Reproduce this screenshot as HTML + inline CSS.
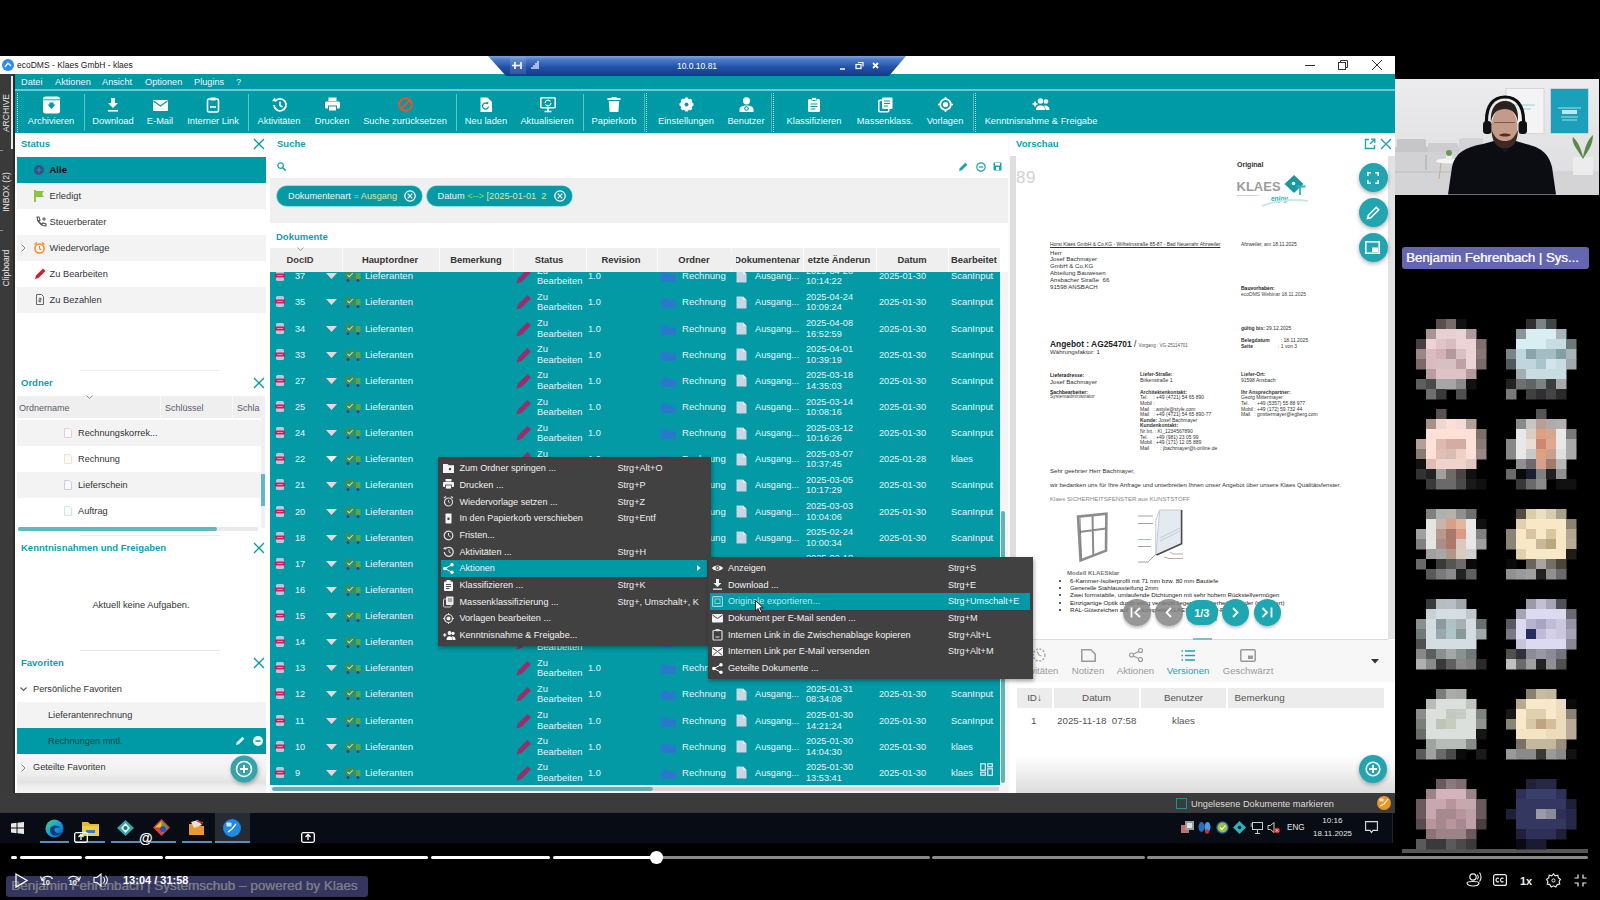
<!DOCTYPE html>
<html><head><meta charset="utf-8">
<style>
*{margin:0;padding:0;box-sizing:border-box}
html,body{width:1600px;height:900px;overflow:hidden;background:#000;font-family:"Liberation Sans",sans-serif}
.a{position:absolute}
.t{position:absolute;white-space:nowrap;line-height:12px;height:12px;font-size:9px}
svg{position:absolute;overflow:visible}
</style></head><body>
<div class="a" style="left:0px;top:56px;width:1395px;height:18px;background:#fff;"></div>
<svg style="left:2px;top:59px;" width="12" height="12" viewBox="0 0 12 12"><circle cx="6" cy="6" r="6" fill="#2a8ee8"/><path d="M3 8 L6 4 L9 7" stroke="#fff" stroke-width="1.3" fill="none"/></svg>
<div class="t" style="left:17px;top:59px;font-size:8.5px;color:#222;">ecoDMS - Klaes GmbH - klaes</div>
<svg style="left:488px;top:56px;z-index:5" width="420" height="20" viewBox="0 0 420 20"><defs><linearGradient id="rdg" x1="0" y1="0" x2="0" y2="1"><stop offset="0" stop-color="#7aa2dc"/><stop offset="0.2" stop-color="#4a78c8"/><stop offset="0.55" stop-color="#2452a8"/><stop offset="1" stop-color="#123a86"/></linearGradient></defs><path d="M0 0 H418 L401 20 H18 Z" fill="url(#rdg)"/><rect x="22" y="1" width="16" height="17" fill="#fff" opacity="0.12"/><path d="M27 6 v7 M24 9.5 h8 M33 6 v7" stroke="#fff" stroke-width="1.6"/><path d="M44 13 v-2 M46 13 v-4 M48 13 v-6 M50 13 v-8" stroke="#fff" stroke-width="1.2"/><path d="M352 13 h5" stroke="#fff" stroke-width="1.5"/><rect x="368" y="8.5" width="5" height="4" stroke="#fff" fill="none" stroke-width="1.2"/><path d="M370 6.5 h5 v4" stroke="#fff" fill="none" stroke-width="1.2"/><path d="M385 7 l5 5 M390 7 l-5 5" stroke="#fff" stroke-width="1.8"/></svg>
<div class="t" style="left:597px;top:60px;font-size:8.5px;color:#fff;width:200px;text-align:center;z-index:6">10.0.10.81</div>
<div class="a" style="left:1305px;top:65px;width:10px;height:1px;background:#333;"></div>
<svg style="left:1338px;top:60px;" width="10" height="10" viewBox="0 0 10 10"><rect x="0.5" y="2.5" width="7" height="7" fill="none" stroke="#333" stroke-width="1"/><path d="M2.5 2.5 V0.5 H9.5 V7.5 H7.5" fill="none" stroke="#333" stroke-width="1"/></svg>
<svg style="left:1372px;top:60px;" width="10" height="10" viewBox="0 0 10 10"><path d="M0 0 L10 10 M10 0 L0 10" stroke="#333" stroke-width="1"/></svg>
<div class="a" style="left:0px;top:74px;width:15px;height:719px;background:#3a3a3a;"></div>
<div class="a" style="left:15px;top:74px;width:1380px;height:59px;background:#009aa6;"></div>
<div class="a" style="left:15px;top:89px;width:1380px;height:2px;background:#6cc9d1;"></div>
<div class="t" style="left:21px;top:76px;font-size:9.2px;color:#eaf8f9;">Datei</div>
<div class="t" style="left:55px;top:76px;font-size:9.2px;color:#eaf8f9;">Aktionen</div>
<div class="t" style="left:102px;top:76px;font-size:9.2px;color:#eaf8f9;">Ansicht</div>
<div class="t" style="left:145px;top:76px;font-size:9.2px;color:#eaf8f9;">Optionen</div>
<div class="t" style="left:194px;top:76px;font-size:9.2px;color:#eaf8f9;">Plugins</div>
<div class="t" style="left:236px;top:76px;font-size:9.2px;color:#eaf8f9;">?</div>
<svg style="left:44px;top:97px;" width="15" height="16" viewBox="0 0 15 16"><rect x="-1" y="-0.5" width="17" height="17" rx="2.5" fill="#fff"/><path d="M-1 2.8 h17" stroke="#009aa6" stroke-width="0.9"/><path d="M3.5 7.5 h8 l-4 4.5z M5.5 5.5 h4 v2.5 h-4z" fill="#009aa6"/></svg>
<div class="t" style="left:-49px;top:115px;font-size:9.3px;color:#f0fbfc;width:200px;text-align:center;">Archivieren</div>
<svg style="left:106px;top:97px;" width="15" height="16" viewBox="0 0 15 16"><path d="M5 1 h4 v5 h3 l-5 5 l-5-5 h3z" fill="#fff"/><rect x="2" y="13" width="10" height="1.6" fill="#fff"/></svg>
<div class="t" style="left:13px;top:115px;font-size:9.3px;color:#f0fbfc;width:200px;text-align:center;">Download</div>
<svg style="left:153px;top:97px;" width="15" height="16" viewBox="0 0 15 16"><rect x="0" y="3" width="15" height="11" rx="1" fill="#fff"/><path d="M0.5 4 L7.5 9 L14.5 4" stroke="#009aa6" stroke-width="1.2" fill="none"/></svg>
<div class="t" style="left:60px;top:115px;font-size:9.3px;color:#f0fbfc;width:200px;text-align:center;">E-Mail</div>
<svg style="left:206px;top:97px;" width="15" height="16" viewBox="0 0 15 16"><rect x="1.5" y="2" width="11" height="13" rx="1.5" fill="none" stroke="#fff" stroke-width="1.6"/><rect x="4.5" y="0.5" width="5" height="3" fill="#fff"/><path d="M4 10 h6" stroke="#fff" stroke-width="1.6"/></svg>
<div class="t" style="left:113px;top:115px;font-size:9.3px;color:#f0fbfc;width:200px;text-align:center;">Interner Link</div>
<svg style="left:272px;top:97px;" width="15" height="16" viewBox="0 0 15 16"><path d="M3.2 4.2 A6 6 0 1 1 2 8" fill="none" stroke="#fff" stroke-width="1.8"/><path d="M0 4 L4 4.5 L3 0.5z" fill="#fff"/><path d="M8 4.5 v4 l2.5 1.5" stroke="#fff" stroke-width="1.5" fill="none"/></svg>
<div class="t" style="left:179px;top:115px;font-size:9.3px;color:#f0fbfc;width:200px;text-align:center;">Aktivitäten</div>
<svg style="left:325px;top:97px;" width="15" height="16" viewBox="0 0 15 16"><rect x="3.5" y="0.5" width="8" height="3.5" fill="#fff"/><rect x="0" y="4.5" width="15" height="7" rx="1.5" fill="#fff"/><rect x="3.5" y="9" width="8" height="5" fill="#fff" stroke="#009aa6" stroke-width="1"/></svg>
<div class="t" style="left:232px;top:115px;font-size:9.3px;color:#f0fbfc;width:200px;text-align:center;">Drucken</div>
<svg style="left:398px;top:97px;" width="15" height="16" viewBox="0 0 15 16"><circle cx="7.5" cy="7.5" r="6.3" fill="none" stroke="#e8532e" stroke-width="2"/><path d="M3 12 L12 3" stroke="#e8532e" stroke-width="2"/></svg>
<div class="t" style="left:305px;top:115px;font-size:9.3px;color:#f0fbfc;width:200px;text-align:center;">Suche zurücksetzen</div>
<svg style="left:479px;top:97px;" width="15" height="16" viewBox="0 0 15 16"><path d="M1.5 0.5 h7 l4.5 4.5 v10 h-11.5z" fill="#fff"/><path d="M9.5 9.5 A3 3 0 1 1 8.5 6.8" stroke="#009aa6" stroke-width="1.3" fill="none"/><path d="M7 5 l2.5 0 l-0.5 2.5z" fill="#009aa6"/></svg>
<div class="t" style="left:386px;top:115px;font-size:9.3px;color:#f0fbfc;width:200px;text-align:center;">Neu laden</div>
<svg style="left:540px;top:97px;" width="15" height="16" viewBox="0 0 15 16"><rect x="0.8" y="0.8" width="14.4" height="10" rx="1" fill="none" stroke="#fff" stroke-width="1.6"/><path d="M8 11 v3 M4.5 14.5 h7" stroke="#fff" stroke-width="1.6"/><path d="M5 6 A3 3 0 0 1 10.5 4.5 M11 6 A3 3 0 0 1 5.5 7.5" stroke="#fff" stroke-width="1.2" fill="none"/></svg>
<div class="t" style="left:447px;top:115px;font-size:9.3px;color:#f0fbfc;width:200px;text-align:center;">Aktualisieren</div>
<svg style="left:607px;top:97px;" width="15" height="16" viewBox="0 0 15 16"><rect x="0.5" y="1" width="13" height="2" fill="#fff"/><rect x="4.5" y="0" width="5" height="1.5" fill="#fff"/><path d="M1.8 4 h10.4 l-0.8 11 h-8.8z" fill="#fff"/></svg>
<div class="t" style="left:514px;top:115px;font-size:9.3px;color:#f0fbfc;width:200px;text-align:center;">Papierkorb</div>
<svg style="left:679px;top:97px;" width="15" height="16" viewBox="0 0 15 16"><circle cx="7.5" cy="7.5" r="4.6" fill="none" stroke="#fff" stroke-width="3.2"/><path d="M7.5 0.5 v14 M0.5 7.5 h14 M2.5 2.5 l10 10 M12.5 2.5 l-10 10" stroke="#fff" stroke-width="2.6"/><circle cx="7.5" cy="7.5" r="2" fill="#009aa6"/></svg>
<div class="t" style="left:586px;top:115px;font-size:9.3px;color:#f0fbfc;width:200px;text-align:center;">Einstellungen</div>
<svg style="left:739px;top:97px;" width="15" height="16" viewBox="0 0 15 16"><circle cx="7.5" cy="3.8" r="3.6" fill="#fff"/><path d="M0.5 15 v-2.5 C0.5 9.5 4 8.5 7.5 8.5 C11 8.5 14.5 9.5 14.5 12.5 V15z" fill="#fff"/><circle cx="7.5" cy="11.5" r="1.8" fill="none" stroke="#009aa6" stroke-width="1.1"/></svg>
<div class="t" style="left:646px;top:115px;font-size:9.3px;color:#f0fbfc;width:200px;text-align:center;">Benutzer</div>
<svg style="left:807px;top:97px;" width="15" height="16" viewBox="0 0 15 16"><rect x="1" y="2" width="12" height="13" rx="1.5" fill="#fff"/><rect x="4.5" y="0.5" width="5" height="3" rx="0.8" fill="#fff" stroke="#009aa6" stroke-width="0.8"/><path d="M3.5 7 h7 M3.5 9.5 h7 M3.5 12 h5" stroke="#009aa6" stroke-width="1.1"/></svg>
<div class="t" style="left:714px;top:115px;font-size:9.3px;color:#f0fbfc;width:200px;text-align:center;">Klassifizieren</div>
<svg style="left:878px;top:97px;" width="15" height="16" viewBox="0 0 15 16"><rect x="0.8" y="3.2" width="10" height="11.5" rx="1" fill="none" stroke="#fff" stroke-width="1.5"/><rect x="4" y="0.5" width="10.5" height="11.5" rx="1" fill="#fff"/><path d="M6 4 h6 M6 6.5 h6 M6 9 h4" stroke="#009aa6" stroke-width="1"/></svg>
<div class="t" style="left:785px;top:115px;font-size:9.3px;color:#f0fbfc;width:200px;text-align:center;">Massenklass.</div>
<svg style="left:938px;top:97px;" width="15" height="16" viewBox="0 0 15 16"><circle cx="7.5" cy="7.5" r="5.3" fill="none" stroke="#fff" stroke-width="1.8"/><circle cx="7.5" cy="7.5" r="2.6" fill="#fff"/><path d="M7.5 0 v2.2 M7.5 12.8 v2.2 M0 7.5 h2.2 M12.8 7.5 h2.2" stroke="#fff" stroke-width="1.6"/></svg>
<div class="t" style="left:845px;top:115px;font-size:9.3px;color:#f0fbfc;width:200px;text-align:center;">Vorlagen</div>
<svg style="left:1032px;top:97px;" width="18" height="16" viewBox="0 0 18 16"><path d="M0.5 7 h5 M3 4.5 v5" stroke="#fff" stroke-width="1.6"/><circle cx="8.5" cy="4" r="2.8" fill="#fff"/><circle cx="14" cy="4.5" r="2.3" fill="#fff"/><path d="M3.8 13 C4 9.5 6 8.5 8.5 8.5 C11 8.5 13 9.5 13 13z" fill="#fff"/><path d="M12 8.5 C15 8.5 17.5 9.5 17.5 13 h-3.5" fill="#fff"/></svg>
<div class="t" style="left:941px;top:115px;font-size:9.3px;color:#f0fbfc;width:200px;text-align:center;">Kenntnisnahme &amp; Freigabe</div>
<div class="a" style="left:84px;top:94px;width:1px;height:37px;background:#5fc4cc;"></div>
<div class="a" style="left:248px;top:94px;width:1px;height:37px;background:#5fc4cc;"></div>
<div class="a" style="left:456px;top:94px;width:1px;height:37px;background:#5fc4cc;"></div>
<div class="a" style="left:583px;top:94px;width:1px;height:37px;background:#5fc4cc;"></div>
<div class="a" style="left:17px;top:93px;width:0;height:39px;border-left:1px dotted #bfe9ed"></div>
<div class="a" style="left:646px;top:93px;width:0;height:39px;border-left:1px dotted #bfe9ed"></div>
<div class="a" style="left:644px;top:93px;width:1px;height:39px;background:#4dbac3;"></div>
<div class="a" style="left:773px;top:93px;width:0;height:39px;border-left:1px dotted #bfe9ed"></div>
<div class="a" style="left:771px;top:93px;width:1px;height:39px;background:#4dbac3;"></div>
<div class="a" style="left:975px;top:93px;width:0;height:39px;border-left:1px dotted #bfe9ed"></div>
<div class="a" style="left:973px;top:93px;width:1px;height:39px;background:#4dbac3;"></div>
<div class="a" style="left:15px;top:133px;width:1380px;height:660px;background:#fff;"></div>
<div class="a" style="left:11px;top:76px;width:2px;height:73px;background:#e8e8e8;"></div>
<div class="a" style="left:13px;top:74px;width:2px;height:719px;background:#2a2a2a;"></div>
<div class="a" style="left:0px;top:150px;width:3px;height:1px;background:#888;"></div>
<div class="a" style="left:0px;top:230px;width:3px;height:1px;background:#888;"></div>
<div class="t" style="left:-44px;top:107px;width:100px;text-align:center;font-size:8.6px;color:#e6e6e6;transform:rotate(-90deg)">ARCHIVE</div>
<div class="t" style="left:-44px;top:186px;width:100px;text-align:center;font-size:8.6px;color:#e6e6e6;transform:rotate(-90deg)">INBOX (2)</div>
<div class="t" style="left:-44px;top:262px;width:100px;text-align:center;font-size:8.6px;color:#e6e6e6;transform:rotate(-90deg)">Clipboard</div>
<div class="t" style="left:21px;top:138px;font-size:9.5px;color:#0a9fb0;font-weight:bold;">Status</div>
<svg style="left:254px;top:139px;" width="10" height="10" viewBox="0 0 10 10"><path d="M0 0 L10 10 M10 0 L0 10" stroke="#009aa6" stroke-width="1.3"/></svg>
<div class="a" style="left:17px;top:157px;width:249px;height:26px;background:#009aa6;"></div>
<svg style="left:34px;top:165px;" width="10" height="10" viewBox="0 0 10 10"><circle cx="5" cy="5" r="5" fill="#3d4d8c"/><path d="M5 2.5 v5 M2.5 5 h5" stroke="#0aa0ad" stroke-width="1.2"/></svg>
<div class="t" style="left:49.5px;top:164px;font-size:9.5px;color:#111;font-weight:bold;">Alle</div>
<div class="a" style="left:17px;top:183px;width:249px;height:26px;background:#f3f3f3;"></div>
<div class="t" style="left:49.5px;top:190px;font-size:9.3px;color:#34363b;">Erledigt</div>
<div class="a" style="left:17px;top:209px;width:249px;height:26px;background:#fff;"></div>
<div class="t" style="left:49.5px;top:216px;font-size:9.3px;color:#34363b;">Steuerberater</div>
<div class="a" style="left:17px;top:235px;width:249px;height:26px;background:#f3f3f3;"></div>
<div class="t" style="left:49.5px;top:242px;font-size:9.3px;color:#34363b;">Wiedervorlage</div>
<div class="a" style="left:17px;top:261px;width:249px;height:26px;background:#fff;"></div>
<div class="t" style="left:49.5px;top:268px;font-size:9.3px;color:#34363b;">Zu Bearbeiten</div>
<div class="a" style="left:17px;top:287px;width:249px;height:26px;background:#f3f3f3;"></div>
<div class="t" style="left:49.5px;top:294px;font-size:9.3px;color:#34363b;">Zu Bezahlen</div>
<svg style="left:34px;top:190px;" width="11" height="12" viewBox="0 0 11 12"><path d="M1 0 v12" stroke="#8cc63f" stroke-width="2"/><path d="M1 1 h9 l-2 3 l2 3 h-9z" fill="#8cc63f"/></svg>
<svg style="left:35px;top:216px;" width="10" height="11" viewBox="0 0 10 11"><path d="M2 1 l2 0 l1 3 l-1.3 1 c0.8 1.6 1.8 2.6 3.3 3.3 l1-1.3 l3 1 v2 c-4 0.5-9-4-9-9z" fill="none" stroke="#555" stroke-width="1.1"/><path d="M7 3 h4 M9 1 v4" stroke="#555" stroke-width="1"/></svg>
<svg style="left:21px;top:244px;" width="5" height="8" viewBox="0 0 5 8"><path d="M0.5 0.5 l3.5 3.5 l-3.5 3.5" stroke="#888" stroke-width="1" fill="none"/></svg>
<svg style="left:34px;top:242px;" width="11" height="12" viewBox="0 0 11 12"><circle cx="5.5" cy="6.5" r="4.6" fill="none" stroke="#f08a24" stroke-width="1.5"/><path d="M5.5 4 v2.6 l1.8 1.2" stroke="#f08a24" stroke-width="1.1" fill="none"/><path d="M0.5 2.5 l2.5-2 M10.5 2.5 l-2.5-2" stroke="#f08a24" stroke-width="1.5"/></svg>
<svg style="left:34px;top:268px;" width="12" height="12" viewBox="0 0 12 12"><path d="M1 11 l1-3.5 l7-7 l2.5 2.5 l-7 7z" fill="#d0202e"/></svg>
<svg style="left:36px;top:294px;" width="8" height="11" viewBox="0 0 8 11"><path d="M0.5 0.5 h5 l2 2 v8 h-7z" fill="none" stroke="#666" stroke-width="1"/><path d="M4 3.5 v5 M2.8 4.5 h2.4 v1.5 h-2.4 v1.5 h2.4" stroke="#666" stroke-width="0.8" fill="none"/></svg>
<div class="a" style="left:80px;top:370px;width:140px;height:1px;background:#ececec;"></div>
<div class="t" style="left:21px;top:377px;font-size:9.5px;color:#0a9fb0;font-weight:bold;">Ordner</div>
<svg style="left:254px;top:378px;" width="10" height="10" viewBox="0 0 10 10"><path d="M0 0 L10 10 M10 0 L0 10" stroke="#009aa6" stroke-width="1.3"/></svg>
<div class="a" style="left:17px;top:396px;width:244px;height:22px;background:#efefef;"></div>
<div class="a" style="left:160px;top:396px;width:1px;height:22px;background:#fafafa;"></div>
<div class="a" style="left:232px;top:396px;width:1px;height:22px;background:#fafafa;"></div>
<svg style="left:86px;top:395px;" width="7" height="4" viewBox="0 0 7 4"><path d="M0.5 0.5 l3 3 l3-3" stroke="#777" stroke-width="0.8" fill="none"/></svg>
<div class="t" style="left:19px;top:402px;font-size:9px;color:#5a5a6a;">Ordnername</div>
<div class="t" style="left:165px;top:402px;font-size:9px;color:#5a5a6a;">Schlüssel</div>
<div class="t" style="left:237px;top:402px;font-size:9px;color:#5a5a6a;">Schla</div>
<div class="a" style="left:17px;top:420px;width:244px;height:26px;background:#f3f3f3;"></div>
<svg style="left:64px;top:428px;" width="8" height="10" viewBox="0 0 8 10"><path d="M0.5 0.5 h5 l2 2 v7 h-7z" fill="#fafafa" stroke="#e8c8e8" stroke-width="1"/></svg>
<div class="t" style="left:78px;top:427px;font-size:9.2px;color:#333;">Rechnungskorrek...</div>
<div class="a" style="left:17px;top:446px;width:244px;height:26px;background:#fff;"></div>
<svg style="left:64px;top:454px;" width="8" height="10" viewBox="0 0 8 10"><path d="M0.5 0.5 h5 l2 2 v7 h-7z" fill="#fafafa" stroke="#ecebc0" stroke-width="1"/></svg>
<div class="t" style="left:78px;top:453px;font-size:9.2px;color:#333;">Rechnung</div>
<div class="a" style="left:17px;top:472px;width:244px;height:26px;background:#f3f3f3;"></div>
<svg style="left:64px;top:480px;" width="8" height="10" viewBox="0 0 8 10"><path d="M0.5 0.5 h5 l2 2 v7 h-7z" fill="#fafafa" stroke="#cfc8ec" stroke-width="1"/></svg>
<div class="t" style="left:78px;top:479px;font-size:9.2px;color:#333;">Lieferschein</div>
<div class="a" style="left:17px;top:498px;width:244px;height:26px;background:#fff;"></div>
<svg style="left:64px;top:506px;" width="8" height="10" viewBox="0 0 8 10"><path d="M0.5 0.5 h5 l2 2 v7 h-7z" fill="#fafafa" stroke="#cde9d8" stroke-width="1"/></svg>
<div class="t" style="left:78px;top:505px;font-size:9.2px;color:#333;">Auftrag</div>
<div class="a" style="left:261px;top:396px;width:4px;height:132px;background:#f0f0f0;"></div>
<div class="a" style="left:261px;top:474px;width:4px;height:32px;background:#5fb9bf;"></div>
<div class="a" style="left:18px;top:527px;width:240px;height:4px;background:#eaeaea;"></div>
<div class="a" style="left:18px;top:527px;width:199px;height:4px;background:#5fb9bf;border-radius:2px"></div>
<div class="a" style="left:80px;top:535px;width:140px;height:1px;background:#ececec;"></div>
<div class="t" style="left:21px;top:542px;font-size:9.5px;color:#0a9fb0;font-weight:bold;">Kenntnisnahmen und Freigaben</div>
<svg style="left:254px;top:543px;" width="10" height="10" viewBox="0 0 10 10"><path d="M0 0 L10 10 M10 0 L0 10" stroke="#009aa6" stroke-width="1.3"/></svg>
<div class="t" style="left:41px;top:599px;font-size:9.3px;color:#333;width:200px;text-align:center;">Aktuell keine Aufgaben.</div>
<div class="a" style="left:80px;top:650px;width:140px;height:1px;background:#e6e6e6;"></div>
<div class="t" style="left:21px;top:657px;font-size:9.5px;color:#0a9fb0;font-weight:bold;">Favoriten</div>
<svg style="left:254px;top:658px;" width="10" height="10" viewBox="0 0 10 10"><path d="M0 0 L10 10 M10 0 L0 10" stroke="#009aa6" stroke-width="1.3"/></svg>
<svg style="left:20px;top:687px;" width="7" height="5" viewBox="0 0 7 5"><path d="M0.5 0.5 l3 3 l3-3" stroke="#555" stroke-width="1.1" fill="none"/></svg>
<div class="t" style="left:33px;top:683px;font-size:9.2px;color:#333;">Persönliche Favoriten</div>
<div class="a" style="left:17px;top:702px;width:249px;height:26px;background:#f3f3f3;"></div>
<div class="t" style="left:48px;top:709px;font-size:9.2px;color:#333;">Lieferantenrechnung</div>
<div class="a" style="left:17px;top:728px;width:249px;height:26px;background:#009aa6;"></div>
<div class="t" style="left:48px;top:735px;font-size:9.2px;color:#17433f;">Rechnungen mntl.</div>
<svg style="left:235px;top:736px;" width="10" height="10" viewBox="0 0 10 10"><path d="M1 9 l0.8-2.8 l5.5-5.5 l2 2 l-5.5 5.5z" fill="#e8f6f7"/></svg>
<svg style="left:253px;top:736px;" width="10" height="10" viewBox="0 0 10 10"><circle cx="5" cy="5" r="5" fill="#f2fbfb"/><path d="M2.5 5 h5" stroke="#009aa6" stroke-width="1.5"/></svg>
<div class="a" style="left:17px;top:754px;width:249px;height:39px;background:linear-gradient(#f8f8f8 0%,#efefef 50%,#e2e2e2 72%,#f0f0f0 85%,#f4f4f4 100%);"></div>
<svg style="left:21px;top:764px;" width="5" height="8" viewBox="0 0 5 8"><path d="M0.5 0.5 l3.5 3.5 l-3.5 3.5" stroke="#888" stroke-width="1" fill="none"/></svg>
<div class="t" style="left:33px;top:761px;font-size:9.2px;color:#333;">Geteilte Favoriten</div>
<svg style="left:230px;top:755px;filter:drop-shadow(1px 2px 2px rgba(0,0,0,.3))" width="28" height="28" viewBox="0 0 28 28"><circle cx="14" cy="14" r="13.5" fill="#34a3aa"/><circle cx="14" cy="14" r="7.5" fill="none" stroke="#fff" stroke-width="1.6"/><path d="M14 10 v8 M10 14 h8" stroke="#fff" stroke-width="1.8"/></svg>
<div class="a" style="left:266px;top:133px;width:4px;height:660px;background:#fff;"></div>
<div class="t" style="left:277px;top:138px;font-size:9.5px;color:#0a9fb0;font-weight:bold;">Suche</div>
<svg style="left:277px;top:162px;" width="9" height="9" viewBox="0 0 9 9"><circle cx="3.6" cy="3.6" r="2.8" fill="none" stroke="#1aa3ae" stroke-width="1.3"/><path d="M5.6 5.6 l3 3" stroke="#1aa3ae" stroke-width="1.5"/></svg>
<svg style="left:958px;top:162px;" width="10" height="10" viewBox="0 0 10 10"><path d="M1 9 l0.8-2.8 l5.5-5.5 l2 2 l-5.5 5.5z" fill="#1aa3ae"/></svg>
<svg style="left:976px;top:162px;" width="10" height="10" viewBox="0 0 10 10"><circle cx="5" cy="5" r="4.2" fill="none" stroke="#1aa3ae" stroke-width="1.2"/><path d="M2.8 5 h4.4" stroke="#1aa3ae" stroke-width="1.3"/></svg>
<svg style="left:993px;top:162px;" width="9" height="9" viewBox="0 0 9 9"><rect x="0.5" y="0.5" width="8" height="8" rx="0.8" fill="#1aa3ae"/><rect x="2" y="1" width="5" height="2.5" fill="#fff"/><rect x="3" y="5" width="3" height="3" fill="#fff"/></svg>
<div class="a" style="left:270px;top:178px;width:738px;height:45px;background:#f0f0f0;"></div>
<div class="a" style="left:277px;top:186px;width:145px;height:19.5px;border-radius:10px;background:#0899a5;box-shadow:0 0 0 0.6px #3cc7d2"></div>
<div class="a" style="left:427px;top:186px;width:145px;height:19.5px;border-radius:10px;background:#0899a5;box-shadow:0 0 0 0.6px #3cc7d2"></div>
<div class="t" style="left:288px;top:189.5px;font-size:9.2px;color:#eef6f0;">Dokumentenart <span style="color:#b8ee58">=</span> <span style="color:#d6e8a8">Ausgang</span></div>
<div class="t" style="left:437.5px;top:189.5px;font-size:9.2px;color:#eef6f0;">Datum <span style="color:#7fe05a">&lt;--&gt;</span> <span style="color:#d8e6a0">[2025-01-01&nbsp; 2</span></div>
<svg style="left:403.5px;top:189.5px;" width="12" height="12" viewBox="0 0 12 12"><circle cx="6" cy="6" r="5.2" fill="none" stroke="#fff" stroke-width="1.2"/><path d="M3.7 3.7 l4.6 4.6 M8.3 3.7 l-4.6 4.6" stroke="#fff" stroke-width="1.2"/></svg>
<svg style="left:553.7px;top:189.5px;" width="12" height="12" viewBox="0 0 12 12"><circle cx="6" cy="6" r="5.2" fill="none" stroke="#fff" stroke-width="1.2"/><path d="M3.7 3.7 l4.6 4.6 M8.3 3.7 l-4.6 4.6" stroke="#fff" stroke-width="1.2"/></svg>
<div class="t" style="left:276px;top:231px;font-size:9.5px;color:#0a9fb0;font-weight:bold;">Dokumente</div>
<div class="a" style="left:270px;top:248px;width:730px;height:24px;background:#efefef;"></div>
<div class="a" style="left:342px;top:248px;width:1px;height:24px;background:#fbfbfb;"></div>
<div class="a" style="left:439px;top:248px;width:1px;height:24px;background:#fbfbfb;"></div>
<div class="a" style="left:513px;top:248px;width:1px;height:24px;background:#fbfbfb;"></div>
<div class="a" style="left:586px;top:248px;width:1px;height:24px;background:#fbfbfb;"></div>
<div class="a" style="left:657px;top:248px;width:1px;height:24px;background:#fbfbfb;"></div>
<div class="a" style="left:731px;top:248px;width:1px;height:24px;background:#fbfbfb;"></div>
<div class="a" style="left:803px;top:248px;width:1px;height:24px;background:#fbfbfb;"></div>
<div class="a" style="left:876px;top:248px;width:1px;height:24px;background:#fbfbfb;"></div>
<div class="a" style="left:948px;top:248px;width:1px;height:24px;background:#fbfbfb;"></div>
<svg style="left:297px;top:247px;" width="7" height="4" viewBox="0 0 7 4"><path d="M0.5 0.5 l3 3 l3-3" stroke="#888" stroke-width="0.8" fill="none"/></svg>
<div class="t" style="left:200px;top:254px;font-size:9.4px;color:#4a3a3a;font-weight:bold;width:200px;text-align:center;">DocID</div>
<div class="t" style="left:290px;top:254px;font-size:9.4px;color:#3a3030;font-weight:bold;width:200px;text-align:center;">Hauptordner</div>
<div class="t" style="left:376px;top:254px;font-size:9.4px;color:#333;font-weight:bold;width:200px;text-align:center;">Bemerkung</div>
<div class="t" style="left:449px;top:254px;font-size:9.4px;color:#333;font-weight:bold;width:200px;text-align:center;">Status</div>
<div class="t" style="left:521px;top:254px;font-size:9.4px;color:#333;font-weight:bold;width:200px;text-align:center;">Revision</div>
<div class="t" style="left:594px;top:254px;font-size:9.4px;color:#333;font-weight:bold;width:200px;text-align:center;">Ordner</div>
<div class="t" style="left:667px;top:254px;font-size:9.4px;color:#333;font-weight:bold;width:200px;text-align:center;">Dokumentenar</div>
<div class="t" style="left:739px;top:254px;font-size:9.4px;color:#333;font-weight:bold;width:200px;text-align:center;">etzte Änderun</div>
<div class="t" style="left:812px;top:254px;font-size:9.4px;color:#333;font-weight:bold;width:200px;text-align:center;">Datum</div>
<div class="t" style="left:874px;top:254px;font-size:9.4px;color:#333;font-weight:bold;width:200px;text-align:center;">Bearbeitet</div>
<div class="a" style="left:731px;top:252px;width:5px;height:16px;background:#efefef;"></div>
<div class="a" style="left:270px;top:272px;width:730px;height:513px;overflow:hidden;background:#0399a5">
<svg style="left:5px;top:-1.7px" width="10" height="11" viewBox="0 0 10 11"><rect x="1" y="0" width="8" height="11" rx="1.5" fill="#b9c6dc"/><rect x="0" y="3.5" width="10" height="4" rx="1" fill="#d01c5a"/><path d="M2 5.5 h6" stroke="#f6b0c8" stroke-width="0.7"/></svg>
<div class="t" style="left:25px;top:-1.7px;font-size:9.2px;color:#e6f6f8">37</div>
<svg style="left:56px;top:1.3px" width="11" height="6" viewBox="0 0 11 6"><path d="M0 0 h11 l-5.5 6z" fill="#e9d6d6"/></svg>
<svg style="left:75px;top:-1.7px" width="16" height="12" viewBox="0 0 16 12"><rect x="0" y="1" width="10" height="8" fill="#3c8c5c"/><path d="M2.5 5 l1.8 1.8 l3.5-3.8" stroke="#b9e6c6" stroke-width="1.1" fill="none"/><rect x="11" y="3" width="4.5" height="6" fill="#5aa74a"/><circle cx="3" cy="10.5" r="1.5" fill="#3b3f8c"/><circle cx="13" cy="10.5" r="1.5" fill="#3b3f8c"/></svg>
<div class="t" style="left:95px;top:-1.7px;font-size:9.6px;color:#e6f6f8">Lieferanten</div>
<svg style="left:245px;top:-4.7px" width="18" height="18" viewBox="0 0 18 18"><path d="M1.5 16.5 l1.5-5 l9.5-9.5 l3.5 3.5 l-9.5 9.5z" fill="#9a2e6c"/></svg>
<div class="t" style="left:267px;top:-7.2px;font-size:9.4px;color:#e6f6f8">Zu</div>
<div class="t" style="left:267px;top:3.3px;font-size:9.4px;color:#e6f6f8">Bearbeiten</div>
<div class="t" style="left:318px;top:-1.7px;font-size:9.2px;color:#e6f6f8">1.0</div>
<svg style="left:391px;top:-0.7px" width="15" height="11" viewBox="0 0 15 11"><path d="M0 1.5 h5.5 l1.5 1.5 h8 v8 h-15z" fill="#2a78cc"/></svg>
<div class="t" style="left:412px;top:-1.7px;font-size:9.6px;color:#e6f6f8">Rechnung</div>
<svg style="left:466px;top:-2.2px" width="11" height="13" viewBox="0 0 11 13"><path d="M0.5 0.5 h6.5 l3.5 3.5 v8.5 h-10z" fill="#c9d6e4"/><path d="M7 0.5 v3.5 h3.5" fill="#e8eef4"/></svg>
<div class="t" style="left:485px;top:-1.7px;font-size:9.2px;color:#e6f6f8">Ausgang...</div>
<div class="t" style="left:536px;top:-7.2px;font-size:9.2px;color:#e6f6f8">2025-04-28</div>
<div class="t" style="left:536px;top:3.3px;font-size:9.2px;color:#e6f6f8">10:14:22</div>
<div class="t" style="left:609px;top:-1.7px;font-size:9.2px;color:#e6f6f8">2025-01-30</div>
<div class="t" style="left:681px;top:-1.7px;font-size:9.4px;color:#e6f6f8">ScanInput</div>
<svg style="left:5px;top:24.4px" width="10" height="11" viewBox="0 0 10 11"><rect x="1" y="0" width="8" height="11" rx="1.5" fill="#b9c6dc"/><rect x="0" y="3.5" width="10" height="4" rx="1" fill="#d01c5a"/><path d="M2 5.5 h6" stroke="#f6b0c8" stroke-width="0.7"/></svg>
<div class="t" style="left:25px;top:24.4px;font-size:9.2px;color:#e6f6f8">35</div>
<svg style="left:56px;top:27.4px" width="11" height="6" viewBox="0 0 11 6"><path d="M0 0 h11 l-5.5 6z" fill="#e9d6d6"/></svg>
<svg style="left:75px;top:24.4px" width="16" height="12" viewBox="0 0 16 12"><rect x="0" y="1" width="10" height="8" fill="#3c8c5c"/><path d="M2.5 5 l1.8 1.8 l3.5-3.8" stroke="#b9e6c6" stroke-width="1.1" fill="none"/><rect x="11" y="3" width="4.5" height="6" fill="#5aa74a"/><circle cx="3" cy="10.5" r="1.5" fill="#3b3f8c"/><circle cx="13" cy="10.5" r="1.5" fill="#3b3f8c"/></svg>
<div class="t" style="left:95px;top:24.4px;font-size:9.6px;color:#e6f6f8">Lieferanten</div>
<svg style="left:245px;top:21.4px" width="18" height="18" viewBox="0 0 18 18"><path d="M1.5 16.5 l1.5-5 l9.5-9.5 l3.5 3.5 l-9.5 9.5z" fill="#9a2e6c"/></svg>
<div class="t" style="left:267px;top:18.9px;font-size:9.4px;color:#e6f6f8">Zu</div>
<div class="t" style="left:267px;top:29.4px;font-size:9.4px;color:#e6f6f8">Bearbeiten</div>
<div class="t" style="left:318px;top:24.4px;font-size:9.2px;color:#e6f6f8">1.0</div>
<svg style="left:391px;top:25.4px" width="15" height="11" viewBox="0 0 15 11"><path d="M0 1.5 h5.5 l1.5 1.5 h8 v8 h-15z" fill="#2a78cc"/></svg>
<div class="t" style="left:412px;top:24.4px;font-size:9.6px;color:#e6f6f8">Rechnung</div>
<svg style="left:466px;top:23.9px" width="11" height="13" viewBox="0 0 11 13"><path d="M0.5 0.5 h6.5 l3.5 3.5 v8.5 h-10z" fill="#c9d6e4"/><path d="M7 0.5 v3.5 h3.5" fill="#e8eef4"/></svg>
<div class="t" style="left:485px;top:24.4px;font-size:9.2px;color:#e6f6f8">Ausgang...</div>
<div class="t" style="left:536px;top:18.9px;font-size:9.2px;color:#e6f6f8">2025-04-24</div>
<div class="t" style="left:536px;top:29.4px;font-size:9.2px;color:#e6f6f8">10:09:24</div>
<div class="t" style="left:609px;top:24.4px;font-size:9.2px;color:#e6f6f8">2025-01-30</div>
<div class="t" style="left:681px;top:24.4px;font-size:9.4px;color:#e6f6f8">ScanInput</div>
<svg style="left:5px;top:50.6px" width="10" height="11" viewBox="0 0 10 11"><rect x="1" y="0" width="8" height="11" rx="1.5" fill="#b9c6dc"/><rect x="0" y="3.5" width="10" height="4" rx="1" fill="#d01c5a"/><path d="M2 5.5 h6" stroke="#f6b0c8" stroke-width="0.7"/></svg>
<div class="t" style="left:25px;top:50.6px;font-size:9.2px;color:#e6f6f8">34</div>
<svg style="left:56px;top:53.6px" width="11" height="6" viewBox="0 0 11 6"><path d="M0 0 h11 l-5.5 6z" fill="#e9d6d6"/></svg>
<svg style="left:75px;top:50.6px" width="16" height="12" viewBox="0 0 16 12"><rect x="0" y="1" width="10" height="8" fill="#3c8c5c"/><path d="M2.5 5 l1.8 1.8 l3.5-3.8" stroke="#b9e6c6" stroke-width="1.1" fill="none"/><rect x="11" y="3" width="4.5" height="6" fill="#5aa74a"/><circle cx="3" cy="10.5" r="1.5" fill="#3b3f8c"/><circle cx="13" cy="10.5" r="1.5" fill="#3b3f8c"/></svg>
<div class="t" style="left:95px;top:50.6px;font-size:9.6px;color:#e6f6f8">Lieferanten</div>
<svg style="left:245px;top:47.6px" width="18" height="18" viewBox="0 0 18 18"><path d="M1.5 16.5 l1.5-5 l9.5-9.5 l3.5 3.5 l-9.5 9.5z" fill="#9a2e6c"/></svg>
<div class="t" style="left:267px;top:45.1px;font-size:9.4px;color:#e6f6f8">Zu</div>
<div class="t" style="left:267px;top:55.6px;font-size:9.4px;color:#e6f6f8">Bearbeiten</div>
<div class="t" style="left:318px;top:50.6px;font-size:9.2px;color:#e6f6f8">1.0</div>
<svg style="left:391px;top:51.6px" width="15" height="11" viewBox="0 0 15 11"><path d="M0 1.5 h5.5 l1.5 1.5 h8 v8 h-15z" fill="#2a78cc"/></svg>
<div class="t" style="left:412px;top:50.6px;font-size:9.6px;color:#e6f6f8">Rechnung</div>
<svg style="left:466px;top:50.1px" width="11" height="13" viewBox="0 0 11 13"><path d="M0.5 0.5 h6.5 l3.5 3.5 v8.5 h-10z" fill="#c9d6e4"/><path d="M7 0.5 v3.5 h3.5" fill="#e8eef4"/></svg>
<div class="t" style="left:485px;top:50.6px;font-size:9.2px;color:#e6f6f8">Ausgang...</div>
<div class="t" style="left:536px;top:45.1px;font-size:9.2px;color:#e6f6f8">2025-04-08</div>
<div class="t" style="left:536px;top:55.6px;font-size:9.2px;color:#e6f6f8">16:52:59</div>
<div class="t" style="left:609px;top:50.6px;font-size:9.2px;color:#e6f6f8">2025-01-30</div>
<div class="t" style="left:681px;top:50.6px;font-size:9.4px;color:#e6f6f8">ScanInput</div>
<svg style="left:5px;top:76.7px" width="10" height="11" viewBox="0 0 10 11"><rect x="1" y="0" width="8" height="11" rx="1.5" fill="#b9c6dc"/><rect x="0" y="3.5" width="10" height="4" rx="1" fill="#d01c5a"/><path d="M2 5.5 h6" stroke="#f6b0c8" stroke-width="0.7"/></svg>
<div class="t" style="left:25px;top:76.7px;font-size:9.2px;color:#e6f6f8">33</div>
<svg style="left:56px;top:79.7px" width="11" height="6" viewBox="0 0 11 6"><path d="M0 0 h11 l-5.5 6z" fill="#e9d6d6"/></svg>
<svg style="left:75px;top:76.7px" width="16" height="12" viewBox="0 0 16 12"><rect x="0" y="1" width="10" height="8" fill="#3c8c5c"/><path d="M2.5 5 l1.8 1.8 l3.5-3.8" stroke="#b9e6c6" stroke-width="1.1" fill="none"/><rect x="11" y="3" width="4.5" height="6" fill="#5aa74a"/><circle cx="3" cy="10.5" r="1.5" fill="#3b3f8c"/><circle cx="13" cy="10.5" r="1.5" fill="#3b3f8c"/></svg>
<div class="t" style="left:95px;top:76.7px;font-size:9.6px;color:#e6f6f8">Lieferanten</div>
<svg style="left:245px;top:73.7px" width="18" height="18" viewBox="0 0 18 18"><path d="M1.5 16.5 l1.5-5 l9.5-9.5 l3.5 3.5 l-9.5 9.5z" fill="#9a2e6c"/></svg>
<div class="t" style="left:267px;top:71.2px;font-size:9.4px;color:#e6f6f8">Zu</div>
<div class="t" style="left:267px;top:81.7px;font-size:9.4px;color:#e6f6f8">Bearbeiten</div>
<div class="t" style="left:318px;top:76.7px;font-size:9.2px;color:#e6f6f8">1.0</div>
<svg style="left:391px;top:77.7px" width="15" height="11" viewBox="0 0 15 11"><path d="M0 1.5 h5.5 l1.5 1.5 h8 v8 h-15z" fill="#2a78cc"/></svg>
<div class="t" style="left:412px;top:76.7px;font-size:9.6px;color:#e6f6f8">Rechnung</div>
<svg style="left:466px;top:76.2px" width="11" height="13" viewBox="0 0 11 13"><path d="M0.5 0.5 h6.5 l3.5 3.5 v8.5 h-10z" fill="#c9d6e4"/><path d="M7 0.5 v3.5 h3.5" fill="#e8eef4"/></svg>
<div class="t" style="left:485px;top:76.7px;font-size:9.2px;color:#e6f6f8">Ausgang...</div>
<div class="t" style="left:536px;top:71.2px;font-size:9.2px;color:#e6f6f8">2025-04-01</div>
<div class="t" style="left:536px;top:81.7px;font-size:9.2px;color:#e6f6f8">10:39:19</div>
<div class="t" style="left:609px;top:76.7px;font-size:9.2px;color:#e6f6f8">2025-01-30</div>
<div class="t" style="left:681px;top:76.7px;font-size:9.4px;color:#e6f6f8">ScanInput</div>
<svg style="left:5px;top:102.8px" width="10" height="11" viewBox="0 0 10 11"><rect x="1" y="0" width="8" height="11" rx="1.5" fill="#b9c6dc"/><rect x="0" y="3.5" width="10" height="4" rx="1" fill="#d01c5a"/><path d="M2 5.5 h6" stroke="#f6b0c8" stroke-width="0.7"/></svg>
<div class="t" style="left:25px;top:102.8px;font-size:9.2px;color:#e6f6f8">27</div>
<svg style="left:56px;top:105.8px" width="11" height="6" viewBox="0 0 11 6"><path d="M0 0 h11 l-5.5 6z" fill="#e9d6d6"/></svg>
<svg style="left:75px;top:102.8px" width="16" height="12" viewBox="0 0 16 12"><rect x="0" y="1" width="10" height="8" fill="#3c8c5c"/><path d="M2.5 5 l1.8 1.8 l3.5-3.8" stroke="#b9e6c6" stroke-width="1.1" fill="none"/><rect x="11" y="3" width="4.5" height="6" fill="#5aa74a"/><circle cx="3" cy="10.5" r="1.5" fill="#3b3f8c"/><circle cx="13" cy="10.5" r="1.5" fill="#3b3f8c"/></svg>
<div class="t" style="left:95px;top:102.8px;font-size:9.6px;color:#e6f6f8">Lieferanten</div>
<svg style="left:245px;top:99.8px" width="18" height="18" viewBox="0 0 18 18"><path d="M1.5 16.5 l1.5-5 l9.5-9.5 l3.5 3.5 l-9.5 9.5z" fill="#9a2e6c"/></svg>
<div class="t" style="left:267px;top:97.3px;font-size:9.4px;color:#e6f6f8">Zu</div>
<div class="t" style="left:267px;top:107.8px;font-size:9.4px;color:#e6f6f8">Bearbeiten</div>
<div class="t" style="left:318px;top:102.8px;font-size:9.2px;color:#e6f6f8">1.0</div>
<svg style="left:391px;top:103.8px" width="15" height="11" viewBox="0 0 15 11"><path d="M0 1.5 h5.5 l1.5 1.5 h8 v8 h-15z" fill="#2a78cc"/></svg>
<div class="t" style="left:412px;top:102.8px;font-size:9.6px;color:#e6f6f8">Rechnung</div>
<svg style="left:466px;top:102.3px" width="11" height="13" viewBox="0 0 11 13"><path d="M0.5 0.5 h6.5 l3.5 3.5 v8.5 h-10z" fill="#c9d6e4"/><path d="M7 0.5 v3.5 h3.5" fill="#e8eef4"/></svg>
<div class="t" style="left:485px;top:102.8px;font-size:9.2px;color:#e6f6f8">Ausgang...</div>
<div class="t" style="left:536px;top:97.3px;font-size:9.2px;color:#e6f6f8">2025-03-18</div>
<div class="t" style="left:536px;top:107.8px;font-size:9.2px;color:#e6f6f8">14:35:03</div>
<div class="t" style="left:609px;top:102.8px;font-size:9.2px;color:#e6f6f8">2025-01-30</div>
<div class="t" style="left:681px;top:102.8px;font-size:9.4px;color:#e6f6f8">ScanInput</div>
<svg style="left:5px;top:129.0px" width="10" height="11" viewBox="0 0 10 11"><rect x="1" y="0" width="8" height="11" rx="1.5" fill="#b9c6dc"/><rect x="0" y="3.5" width="10" height="4" rx="1" fill="#d01c5a"/><path d="M2 5.5 h6" stroke="#f6b0c8" stroke-width="0.7"/></svg>
<div class="t" style="left:25px;top:129.0px;font-size:9.2px;color:#e6f6f8">25</div>
<svg style="left:56px;top:132.0px" width="11" height="6" viewBox="0 0 11 6"><path d="M0 0 h11 l-5.5 6z" fill="#e9d6d6"/></svg>
<svg style="left:75px;top:129.0px" width="16" height="12" viewBox="0 0 16 12"><rect x="0" y="1" width="10" height="8" fill="#3c8c5c"/><path d="M2.5 5 l1.8 1.8 l3.5-3.8" stroke="#b9e6c6" stroke-width="1.1" fill="none"/><rect x="11" y="3" width="4.5" height="6" fill="#5aa74a"/><circle cx="3" cy="10.5" r="1.5" fill="#3b3f8c"/><circle cx="13" cy="10.5" r="1.5" fill="#3b3f8c"/></svg>
<div class="t" style="left:95px;top:129.0px;font-size:9.6px;color:#e6f6f8">Lieferanten</div>
<svg style="left:245px;top:126.0px" width="18" height="18" viewBox="0 0 18 18"><path d="M1.5 16.5 l1.5-5 l9.5-9.5 l3.5 3.5 l-9.5 9.5z" fill="#9a2e6c"/></svg>
<div class="t" style="left:267px;top:123.5px;font-size:9.4px;color:#e6f6f8">Zu</div>
<div class="t" style="left:267px;top:134.0px;font-size:9.4px;color:#e6f6f8">Bearbeiten</div>
<div class="t" style="left:318px;top:129.0px;font-size:9.2px;color:#e6f6f8">1.0</div>
<svg style="left:391px;top:130.0px" width="15" height="11" viewBox="0 0 15 11"><path d="M0 1.5 h5.5 l1.5 1.5 h8 v8 h-15z" fill="#2a78cc"/></svg>
<div class="t" style="left:412px;top:129.0px;font-size:9.6px;color:#e6f6f8">Rechnung</div>
<svg style="left:466px;top:128.5px" width="11" height="13" viewBox="0 0 11 13"><path d="M0.5 0.5 h6.5 l3.5 3.5 v8.5 h-10z" fill="#c9d6e4"/><path d="M7 0.5 v3.5 h3.5" fill="#e8eef4"/></svg>
<div class="t" style="left:485px;top:129.0px;font-size:9.2px;color:#e6f6f8">Ausgang...</div>
<div class="t" style="left:536px;top:123.5px;font-size:9.2px;color:#e6f6f8">2025-03-14</div>
<div class="t" style="left:536px;top:134.0px;font-size:9.2px;color:#e6f6f8">10:08:16</div>
<div class="t" style="left:609px;top:129.0px;font-size:9.2px;color:#e6f6f8">2025-01-30</div>
<div class="t" style="left:681px;top:129.0px;font-size:9.4px;color:#e6f6f8">ScanInput</div>
<svg style="left:5px;top:155.1px" width="10" height="11" viewBox="0 0 10 11"><rect x="1" y="0" width="8" height="11" rx="1.5" fill="#b9c6dc"/><rect x="0" y="3.5" width="10" height="4" rx="1" fill="#d01c5a"/><path d="M2 5.5 h6" stroke="#f6b0c8" stroke-width="0.7"/></svg>
<div class="t" style="left:25px;top:155.1px;font-size:9.2px;color:#e6f6f8">24</div>
<svg style="left:56px;top:158.1px" width="11" height="6" viewBox="0 0 11 6"><path d="M0 0 h11 l-5.5 6z" fill="#e9d6d6"/></svg>
<svg style="left:75px;top:155.1px" width="16" height="12" viewBox="0 0 16 12"><rect x="0" y="1" width="10" height="8" fill="#3c8c5c"/><path d="M2.5 5 l1.8 1.8 l3.5-3.8" stroke="#b9e6c6" stroke-width="1.1" fill="none"/><rect x="11" y="3" width="4.5" height="6" fill="#5aa74a"/><circle cx="3" cy="10.5" r="1.5" fill="#3b3f8c"/><circle cx="13" cy="10.5" r="1.5" fill="#3b3f8c"/></svg>
<div class="t" style="left:95px;top:155.1px;font-size:9.6px;color:#e6f6f8">Lieferanten</div>
<svg style="left:245px;top:152.1px" width="18" height="18" viewBox="0 0 18 18"><path d="M1.5 16.5 l1.5-5 l9.5-9.5 l3.5 3.5 l-9.5 9.5z" fill="#9a2e6c"/></svg>
<div class="t" style="left:267px;top:149.6px;font-size:9.4px;color:#e6f6f8">Zu</div>
<div class="t" style="left:267px;top:160.1px;font-size:9.4px;color:#e6f6f8">Bearbeiten</div>
<div class="t" style="left:318px;top:155.1px;font-size:9.2px;color:#e6f6f8">1.0</div>
<svg style="left:391px;top:156.1px" width="15" height="11" viewBox="0 0 15 11"><path d="M0 1.5 h5.5 l1.5 1.5 h8 v8 h-15z" fill="#2a78cc"/></svg>
<div class="t" style="left:412px;top:155.1px;font-size:9.6px;color:#e6f6f8">Rechnung</div>
<svg style="left:466px;top:154.6px" width="11" height="13" viewBox="0 0 11 13"><path d="M0.5 0.5 h6.5 l3.5 3.5 v8.5 h-10z" fill="#c9d6e4"/><path d="M7 0.5 v3.5 h3.5" fill="#e8eef4"/></svg>
<div class="t" style="left:485px;top:155.1px;font-size:9.2px;color:#e6f6f8">Ausgang...</div>
<div class="t" style="left:536px;top:149.6px;font-size:9.2px;color:#e6f6f8">2025-03-12</div>
<div class="t" style="left:536px;top:160.1px;font-size:9.2px;color:#e6f6f8">10:16:26</div>
<div class="t" style="left:609px;top:155.1px;font-size:9.2px;color:#e6f6f8">2025-01-30</div>
<div class="t" style="left:681px;top:155.1px;font-size:9.4px;color:#e6f6f8">ScanInput</div>
<svg style="left:5px;top:181.2px" width="10" height="11" viewBox="0 0 10 11"><rect x="1" y="0" width="8" height="11" rx="1.5" fill="#b9c6dc"/><rect x="0" y="3.5" width="10" height="4" rx="1" fill="#d01c5a"/><path d="M2 5.5 h6" stroke="#f6b0c8" stroke-width="0.7"/></svg>
<div class="t" style="left:25px;top:181.2px;font-size:9.2px;color:#e6f6f8">22</div>
<svg style="left:56px;top:184.2px" width="11" height="6" viewBox="0 0 11 6"><path d="M0 0 h11 l-5.5 6z" fill="#f6f0f0"/></svg>
<svg style="left:75px;top:181.2px" width="16" height="12" viewBox="0 0 16 12"><rect x="0" y="1" width="10" height="8" fill="#3c8c5c"/><path d="M2.5 5 l1.8 1.8 l3.5-3.8" stroke="#b9e6c6" stroke-width="1.1" fill="none"/><rect x="11" y="3" width="4.5" height="6" fill="#5aa74a"/><circle cx="3" cy="10.5" r="1.5" fill="#3b3f8c"/><circle cx="13" cy="10.5" r="1.5" fill="#3b3f8c"/></svg>
<div class="t" style="left:95px;top:181.2px;font-size:9.6px;color:#e6f6f8">Lieferanten</div>
<svg style="left:245px;top:178.2px" width="18" height="18" viewBox="0 0 18 18"><path d="M1.5 16.5 l1.5-5 l9.5-9.5 l3.5 3.5 l-9.5 9.5z" fill="#9a2e6c"/></svg>
<div class="t" style="left:267px;top:175.7px;font-size:9.4px;color:#e6f6f8">Zu</div>
<div class="t" style="left:267px;top:186.2px;font-size:9.4px;color:#e6f6f8">Bearbeiten</div>
<div class="t" style="left:318px;top:181.2px;font-size:9.2px;color:#e6f6f8">1.0</div>
<svg style="left:391px;top:182.2px" width="15" height="11" viewBox="0 0 15 11"><path d="M0 1.5 h5.5 l1.5 1.5 h8 v8 h-15z" fill="#2a78cc"/></svg>
<div class="t" style="left:412px;top:181.2px;font-size:9.6px;color:#e6f6f8">Rechnung</div>
<svg style="left:466px;top:180.7px" width="11" height="13" viewBox="0 0 11 13"><path d="M0.5 0.5 h6.5 l3.5 3.5 v8.5 h-10z" fill="#c9d6e4"/><path d="M7 0.5 v3.5 h3.5" fill="#e8eef4"/></svg>
<div class="t" style="left:485px;top:181.2px;font-size:9.2px;color:#e6f6f8">Ausgang...</div>
<div class="t" style="left:536px;top:175.7px;font-size:9.2px;color:#e6f6f8">2025-03-07</div>
<div class="t" style="left:536px;top:186.2px;font-size:9.2px;color:#e6f6f8">10:37:45</div>
<div class="t" style="left:609px;top:181.2px;font-size:9.2px;color:#e6f6f8">2025-01-28</div>
<div class="t" style="left:681px;top:181.2px;font-size:9.4px;color:#e6f6f8">klaes</div>
<svg style="left:5px;top:207.3px" width="10" height="11" viewBox="0 0 10 11"><rect x="1" y="0" width="8" height="11" rx="1.5" fill="#b9c6dc"/><rect x="0" y="3.5" width="10" height="4" rx="1" fill="#d01c5a"/><path d="M2 5.5 h6" stroke="#f6b0c8" stroke-width="0.7"/></svg>
<div class="t" style="left:25px;top:207.3px;font-size:9.2px;color:#e6f6f8">21</div>
<svg style="left:56px;top:210.3px" width="11" height="6" viewBox="0 0 11 6"><path d="M0 0 h11 l-5.5 6z" fill="#e9d6d6"/></svg>
<svg style="left:75px;top:207.3px" width="16" height="12" viewBox="0 0 16 12"><rect x="0" y="1" width="10" height="8" fill="#3c8c5c"/><path d="M2.5 5 l1.8 1.8 l3.5-3.8" stroke="#b9e6c6" stroke-width="1.1" fill="none"/><rect x="11" y="3" width="4.5" height="6" fill="#5aa74a"/><circle cx="3" cy="10.5" r="1.5" fill="#3b3f8c"/><circle cx="13" cy="10.5" r="1.5" fill="#3b3f8c"/></svg>
<div class="t" style="left:95px;top:207.3px;font-size:9.6px;color:#e6f6f8">Lieferanten</div>
<svg style="left:245px;top:204.3px" width="18" height="18" viewBox="0 0 18 18"><path d="M1.5 16.5 l1.5-5 l9.5-9.5 l3.5 3.5 l-9.5 9.5z" fill="#9a2e6c"/></svg>
<div class="t" style="left:267px;top:201.8px;font-size:9.4px;color:#e6f6f8">Zu</div>
<div class="t" style="left:267px;top:212.3px;font-size:9.4px;color:#e6f6f8">Bearbeiten</div>
<div class="t" style="left:318px;top:207.3px;font-size:9.2px;color:#e6f6f8">1.0</div>
<svg style="left:391px;top:208.3px" width="15" height="11" viewBox="0 0 15 11"><path d="M0 1.5 h5.5 l1.5 1.5 h8 v8 h-15z" fill="#2a78cc"/></svg>
<div class="t" style="left:412px;top:207.3px;font-size:9.6px;color:#e6f6f8">Rechnung</div>
<svg style="left:466px;top:206.8px" width="11" height="13" viewBox="0 0 11 13"><path d="M0.5 0.5 h6.5 l3.5 3.5 v8.5 h-10z" fill="#c9d6e4"/><path d="M7 0.5 v3.5 h3.5" fill="#e8eef4"/></svg>
<div class="t" style="left:485px;top:207.3px;font-size:9.2px;color:#e6f6f8">Ausgang...</div>
<div class="t" style="left:536px;top:201.8px;font-size:9.2px;color:#e6f6f8">2025-03-05</div>
<div class="t" style="left:536px;top:212.3px;font-size:9.2px;color:#e6f6f8">10:17:29</div>
<div class="t" style="left:609px;top:207.3px;font-size:9.2px;color:#e6f6f8">2025-01-30</div>
<div class="t" style="left:681px;top:207.3px;font-size:9.4px;color:#e6f6f8">ScanInput</div>
<svg style="left:5px;top:233.5px" width="10" height="11" viewBox="0 0 10 11"><rect x="1" y="0" width="8" height="11" rx="1.5" fill="#b9c6dc"/><rect x="0" y="3.5" width="10" height="4" rx="1" fill="#d01c5a"/><path d="M2 5.5 h6" stroke="#f6b0c8" stroke-width="0.7"/></svg>
<div class="t" style="left:25px;top:233.5px;font-size:9.2px;color:#e6f6f8">20</div>
<svg style="left:56px;top:236.5px" width="11" height="6" viewBox="0 0 11 6"><path d="M0 0 h11 l-5.5 6z" fill="#e9d6d6"/></svg>
<svg style="left:75px;top:233.5px" width="16" height="12" viewBox="0 0 16 12"><rect x="0" y="1" width="10" height="8" fill="#3c8c5c"/><path d="M2.5 5 l1.8 1.8 l3.5-3.8" stroke="#b9e6c6" stroke-width="1.1" fill="none"/><rect x="11" y="3" width="4.5" height="6" fill="#5aa74a"/><circle cx="3" cy="10.5" r="1.5" fill="#3b3f8c"/><circle cx="13" cy="10.5" r="1.5" fill="#3b3f8c"/></svg>
<div class="t" style="left:95px;top:233.5px;font-size:9.6px;color:#e6f6f8">Lieferanten</div>
<svg style="left:245px;top:230.5px" width="18" height="18" viewBox="0 0 18 18"><path d="M1.5 16.5 l1.5-5 l9.5-9.5 l3.5 3.5 l-9.5 9.5z" fill="#9a2e6c"/></svg>
<div class="t" style="left:267px;top:228.0px;font-size:9.4px;color:#e6f6f8">Zu</div>
<div class="t" style="left:267px;top:238.5px;font-size:9.4px;color:#e6f6f8">Bearbeiten</div>
<div class="t" style="left:318px;top:233.5px;font-size:9.2px;color:#e6f6f8">1.0</div>
<svg style="left:391px;top:234.5px" width="15" height="11" viewBox="0 0 15 11"><path d="M0 1.5 h5.5 l1.5 1.5 h8 v8 h-15z" fill="#2a78cc"/></svg>
<div class="t" style="left:412px;top:233.5px;font-size:9.6px;color:#e6f6f8">Rechnung</div>
<svg style="left:466px;top:233.0px" width="11" height="13" viewBox="0 0 11 13"><path d="M0.5 0.5 h6.5 l3.5 3.5 v8.5 h-10z" fill="#c9d6e4"/><path d="M7 0.5 v3.5 h3.5" fill="#e8eef4"/></svg>
<div class="t" style="left:485px;top:233.5px;font-size:9.2px;color:#e6f6f8">Ausgang...</div>
<div class="t" style="left:536px;top:228.0px;font-size:9.2px;color:#e6f6f8">2025-03-03</div>
<div class="t" style="left:536px;top:238.5px;font-size:9.2px;color:#e6f6f8">10:04:06</div>
<div class="t" style="left:609px;top:233.5px;font-size:9.2px;color:#e6f6f8">2025-01-30</div>
<div class="t" style="left:681px;top:233.5px;font-size:9.4px;color:#e6f6f8">ScanInput</div>
<svg style="left:5px;top:259.6px" width="10" height="11" viewBox="0 0 10 11"><rect x="1" y="0" width="8" height="11" rx="1.5" fill="#b9c6dc"/><rect x="0" y="3.5" width="10" height="4" rx="1" fill="#d01c5a"/><path d="M2 5.5 h6" stroke="#f6b0c8" stroke-width="0.7"/></svg>
<div class="t" style="left:25px;top:259.6px;font-size:9.2px;color:#e6f6f8">18</div>
<svg style="left:56px;top:262.6px" width="11" height="6" viewBox="0 0 11 6"><path d="M0 0 h11 l-5.5 6z" fill="#e9d6d6"/></svg>
<svg style="left:75px;top:259.6px" width="16" height="12" viewBox="0 0 16 12"><rect x="0" y="1" width="10" height="8" fill="#3c8c5c"/><path d="M2.5 5 l1.8 1.8 l3.5-3.8" stroke="#b9e6c6" stroke-width="1.1" fill="none"/><rect x="11" y="3" width="4.5" height="6" fill="#5aa74a"/><circle cx="3" cy="10.5" r="1.5" fill="#3b3f8c"/><circle cx="13" cy="10.5" r="1.5" fill="#3b3f8c"/></svg>
<div class="t" style="left:95px;top:259.6px;font-size:9.6px;color:#e6f6f8">Lieferanten</div>
<svg style="left:245px;top:256.6px" width="18" height="18" viewBox="0 0 18 18"><path d="M1.5 16.5 l1.5-5 l9.5-9.5 l3.5 3.5 l-9.5 9.5z" fill="#9a2e6c"/></svg>
<div class="t" style="left:267px;top:254.1px;font-size:9.4px;color:#e6f6f8">Zu</div>
<div class="t" style="left:267px;top:264.6px;font-size:9.4px;color:#e6f6f8">Bearbeiten</div>
<div class="t" style="left:318px;top:259.6px;font-size:9.2px;color:#e6f6f8">1.0</div>
<svg style="left:391px;top:260.6px" width="15" height="11" viewBox="0 0 15 11"><path d="M0 1.5 h5.5 l1.5 1.5 h8 v8 h-15z" fill="#2a78cc"/></svg>
<div class="t" style="left:412px;top:259.6px;font-size:9.6px;color:#e6f6f8">Rechnung</div>
<svg style="left:466px;top:259.1px" width="11" height="13" viewBox="0 0 11 13"><path d="M0.5 0.5 h6.5 l3.5 3.5 v8.5 h-10z" fill="#c9d6e4"/><path d="M7 0.5 v3.5 h3.5" fill="#e8eef4"/></svg>
<div class="t" style="left:485px;top:259.6px;font-size:9.2px;color:#e6f6f8">Ausgang...</div>
<div class="t" style="left:536px;top:254.1px;font-size:9.2px;color:#e6f6f8">2025-02-24</div>
<div class="t" style="left:536px;top:264.6px;font-size:9.2px;color:#e6f6f8">10:00:34</div>
<div class="t" style="left:609px;top:259.6px;font-size:9.2px;color:#e6f6f8">2025-01-30</div>
<div class="t" style="left:681px;top:259.6px;font-size:9.4px;color:#e6f6f8">ScanInput</div>
<svg style="left:5px;top:285.7px" width="10" height="11" viewBox="0 0 10 11"><rect x="1" y="0" width="8" height="11" rx="1.5" fill="#b9c6dc"/><rect x="0" y="3.5" width="10" height="4" rx="1" fill="#d01c5a"/><path d="M2 5.5 h6" stroke="#f6b0c8" stroke-width="0.7"/></svg>
<div class="t" style="left:25px;top:285.7px;font-size:9.2px;color:#e6f6f8">17</div>
<svg style="left:56px;top:288.7px" width="11" height="6" viewBox="0 0 11 6"><path d="M0 0 h11 l-5.5 6z" fill="#e9d6d6"/></svg>
<svg style="left:75px;top:285.7px" width="16" height="12" viewBox="0 0 16 12"><rect x="0" y="1" width="10" height="8" fill="#3c8c5c"/><path d="M2.5 5 l1.8 1.8 l3.5-3.8" stroke="#b9e6c6" stroke-width="1.1" fill="none"/><rect x="11" y="3" width="4.5" height="6" fill="#5aa74a"/><circle cx="3" cy="10.5" r="1.5" fill="#3b3f8c"/><circle cx="13" cy="10.5" r="1.5" fill="#3b3f8c"/></svg>
<div class="t" style="left:95px;top:285.7px;font-size:9.6px;color:#e6f6f8">Lieferanten</div>
<svg style="left:245px;top:282.7px" width="18" height="18" viewBox="0 0 18 18"><path d="M1.5 16.5 l1.5-5 l9.5-9.5 l3.5 3.5 l-9.5 9.5z" fill="#9a2e6c"/></svg>
<div class="t" style="left:267px;top:280.2px;font-size:9.4px;color:#e6f6f8">Zu</div>
<div class="t" style="left:267px;top:290.7px;font-size:9.4px;color:#e6f6f8">Bearbeiten</div>
<div class="t" style="left:318px;top:285.7px;font-size:9.2px;color:#e6f6f8">1.0</div>
<svg style="left:391px;top:286.7px" width="15" height="11" viewBox="0 0 15 11"><path d="M0 1.5 h5.5 l1.5 1.5 h8 v8 h-15z" fill="#2a78cc"/></svg>
<div class="t" style="left:412px;top:285.7px;font-size:9.6px;color:#e6f6f8">Rechnung</div>
<svg style="left:466px;top:285.2px" width="11" height="13" viewBox="0 0 11 13"><path d="M0.5 0.5 h6.5 l3.5 3.5 v8.5 h-10z" fill="#c9d6e4"/><path d="M7 0.5 v3.5 h3.5" fill="#e8eef4"/></svg>
<div class="t" style="left:485px;top:285.7px;font-size:9.2px;color:#e6f6f8">Ausgang...</div>
<div class="t" style="left:536px;top:280.2px;font-size:9.2px;color:#e6f6f8">2025-02-18</div>
<div class="t" style="left:536px;top:290.7px;font-size:9.2px;color:#e6f6f8">09:51:27</div>
<div class="t" style="left:609px;top:285.7px;font-size:9.2px;color:#e6f6f8">2025-01-30</div>
<div class="t" style="left:681px;top:285.7px;font-size:9.4px;color:#e6f6f8">ScanInput</div>
<svg style="left:5px;top:311.9px" width="10" height="11" viewBox="0 0 10 11"><rect x="1" y="0" width="8" height="11" rx="1.5" fill="#b9c6dc"/><rect x="0" y="3.5" width="10" height="4" rx="1" fill="#d01c5a"/><path d="M2 5.5 h6" stroke="#f6b0c8" stroke-width="0.7"/></svg>
<div class="t" style="left:25px;top:311.9px;font-size:9.2px;color:#e6f6f8">16</div>
<svg style="left:56px;top:314.9px" width="11" height="6" viewBox="0 0 11 6"><path d="M0 0 h11 l-5.5 6z" fill="#e9d6d6"/></svg>
<svg style="left:75px;top:311.9px" width="16" height="12" viewBox="0 0 16 12"><rect x="0" y="1" width="10" height="8" fill="#3c8c5c"/><path d="M2.5 5 l1.8 1.8 l3.5-3.8" stroke="#b9e6c6" stroke-width="1.1" fill="none"/><rect x="11" y="3" width="4.5" height="6" fill="#5aa74a"/><circle cx="3" cy="10.5" r="1.5" fill="#3b3f8c"/><circle cx="13" cy="10.5" r="1.5" fill="#3b3f8c"/></svg>
<div class="t" style="left:95px;top:311.9px;font-size:9.6px;color:#e6f6f8">Lieferanten</div>
<svg style="left:245px;top:308.9px" width="18" height="18" viewBox="0 0 18 18"><path d="M1.5 16.5 l1.5-5 l9.5-9.5 l3.5 3.5 l-9.5 9.5z" fill="#9a2e6c"/></svg>
<div class="t" style="left:267px;top:306.4px;font-size:9.4px;color:#e6f6f8">Zu</div>
<div class="t" style="left:267px;top:316.9px;font-size:9.4px;color:#e6f6f8">Bearbeiten</div>
<div class="t" style="left:318px;top:311.9px;font-size:9.2px;color:#e6f6f8">1.0</div>
<svg style="left:391px;top:312.9px" width="15" height="11" viewBox="0 0 15 11"><path d="M0 1.5 h5.5 l1.5 1.5 h8 v8 h-15z" fill="#2a78cc"/></svg>
<div class="t" style="left:412px;top:311.9px;font-size:9.6px;color:#e6f6f8">Rechnung</div>
<svg style="left:466px;top:311.4px" width="11" height="13" viewBox="0 0 11 13"><path d="M0.5 0.5 h6.5 l3.5 3.5 v8.5 h-10z" fill="#c9d6e4"/><path d="M7 0.5 v3.5 h3.5" fill="#e8eef4"/></svg>
<div class="t" style="left:485px;top:311.9px;font-size:9.2px;color:#e6f6f8">Ausgang...</div>
<div class="t" style="left:536px;top:306.4px;font-size:9.2px;color:#e6f6f8">2025-02-12</div>
<div class="t" style="left:536px;top:316.9px;font-size:9.2px;color:#e6f6f8">10:22:13</div>
<div class="t" style="left:609px;top:311.9px;font-size:9.2px;color:#e6f6f8">2025-01-30</div>
<div class="t" style="left:681px;top:311.9px;font-size:9.4px;color:#e6f6f8">ScanInput</div>
<svg style="left:5px;top:338.0px" width="10" height="11" viewBox="0 0 10 11"><rect x="1" y="0" width="8" height="11" rx="1.5" fill="#b9c6dc"/><rect x="0" y="3.5" width="10" height="4" rx="1" fill="#d01c5a"/><path d="M2 5.5 h6" stroke="#f6b0c8" stroke-width="0.7"/></svg>
<div class="t" style="left:25px;top:338.0px;font-size:9.2px;color:#e6f6f8">15</div>
<svg style="left:56px;top:341.0px" width="11" height="6" viewBox="0 0 11 6"><path d="M0 0 h11 l-5.5 6z" fill="#e9d6d6"/></svg>
<svg style="left:75px;top:338.0px" width="16" height="12" viewBox="0 0 16 12"><rect x="0" y="1" width="10" height="8" fill="#3c8c5c"/><path d="M2.5 5 l1.8 1.8 l3.5-3.8" stroke="#b9e6c6" stroke-width="1.1" fill="none"/><rect x="11" y="3" width="4.5" height="6" fill="#5aa74a"/><circle cx="3" cy="10.5" r="1.5" fill="#3b3f8c"/><circle cx="13" cy="10.5" r="1.5" fill="#3b3f8c"/></svg>
<div class="t" style="left:95px;top:338.0px;font-size:9.6px;color:#e6f6f8">Lieferanten</div>
<svg style="left:245px;top:335.0px" width="18" height="18" viewBox="0 0 18 18"><path d="M1.5 16.5 l1.5-5 l9.5-9.5 l3.5 3.5 l-9.5 9.5z" fill="#9a2e6c"/></svg>
<div class="t" style="left:267px;top:332.5px;font-size:9.4px;color:#e6f6f8">Zu</div>
<div class="t" style="left:267px;top:343.0px;font-size:9.4px;color:#e6f6f8">Bearbeiten</div>
<div class="t" style="left:318px;top:338.0px;font-size:9.2px;color:#e6f6f8">1.0</div>
<svg style="left:391px;top:339.0px" width="15" height="11" viewBox="0 0 15 11"><path d="M0 1.5 h5.5 l1.5 1.5 h8 v8 h-15z" fill="#2a78cc"/></svg>
<div class="t" style="left:412px;top:338.0px;font-size:9.6px;color:#e6f6f8">Rechnung</div>
<svg style="left:466px;top:337.5px" width="11" height="13" viewBox="0 0 11 13"><path d="M0.5 0.5 h6.5 l3.5 3.5 v8.5 h-10z" fill="#c9d6e4"/><path d="M7 0.5 v3.5 h3.5" fill="#e8eef4"/></svg>
<div class="t" style="left:485px;top:338.0px;font-size:9.2px;color:#e6f6f8">Ausgang...</div>
<div class="t" style="left:536px;top:332.5px;font-size:9.2px;color:#e6f6f8">2025-02-10</div>
<div class="t" style="left:536px;top:343.0px;font-size:9.2px;color:#e6f6f8">11:03:51</div>
<div class="t" style="left:609px;top:338.0px;font-size:9.2px;color:#e6f6f8">2025-01-30</div>
<div class="t" style="left:681px;top:338.0px;font-size:9.4px;color:#e6f6f8">ScanInput</div>
<svg style="left:5px;top:364.1px" width="10" height="11" viewBox="0 0 10 11"><rect x="1" y="0" width="8" height="11" rx="1.5" fill="#b9c6dc"/><rect x="0" y="3.5" width="10" height="4" rx="1" fill="#d01c5a"/><path d="M2 5.5 h6" stroke="#f6b0c8" stroke-width="0.7"/></svg>
<div class="t" style="left:25px;top:364.1px;font-size:9.2px;color:#e6f6f8">14</div>
<svg style="left:56px;top:367.1px" width="11" height="6" viewBox="0 0 11 6"><path d="M0 0 h11 l-5.5 6z" fill="#e9d6d6"/></svg>
<svg style="left:75px;top:364.1px" width="16" height="12" viewBox="0 0 16 12"><rect x="0" y="1" width="10" height="8" fill="#3c8c5c"/><path d="M2.5 5 l1.8 1.8 l3.5-3.8" stroke="#b9e6c6" stroke-width="1.1" fill="none"/><rect x="11" y="3" width="4.5" height="6" fill="#5aa74a"/><circle cx="3" cy="10.5" r="1.5" fill="#3b3f8c"/><circle cx="13" cy="10.5" r="1.5" fill="#3b3f8c"/></svg>
<div class="t" style="left:95px;top:364.1px;font-size:9.6px;color:#e6f6f8">Lieferanten</div>
<svg style="left:245px;top:361.1px" width="18" height="18" viewBox="0 0 18 18"><path d="M1.5 16.5 l1.5-5 l9.5-9.5 l3.5 3.5 l-9.5 9.5z" fill="#9a2e6c"/></svg>
<div class="t" style="left:267px;top:358.6px;font-size:9.4px;color:#e6f6f8">Zu</div>
<div class="t" style="left:267px;top:369.1px;font-size:9.4px;color:#e6f6f8">Bearbeiten</div>
<div class="t" style="left:318px;top:364.1px;font-size:9.2px;color:#e6f6f8">1.0</div>
<svg style="left:391px;top:365.1px" width="15" height="11" viewBox="0 0 15 11"><path d="M0 1.5 h5.5 l1.5 1.5 h8 v8 h-15z" fill="#2a78cc"/></svg>
<div class="t" style="left:412px;top:364.1px;font-size:9.6px;color:#e6f6f8">Rechnung</div>
<svg style="left:466px;top:363.6px" width="11" height="13" viewBox="0 0 11 13"><path d="M0.5 0.5 h6.5 l3.5 3.5 v8.5 h-10z" fill="#c9d6e4"/><path d="M7 0.5 v3.5 h3.5" fill="#e8eef4"/></svg>
<div class="t" style="left:485px;top:364.1px;font-size:9.2px;color:#e6f6f8">Ausgang...</div>
<div class="t" style="left:536px;top:358.6px;font-size:9.2px;color:#e6f6f8">2025-02-05</div>
<div class="t" style="left:536px;top:369.1px;font-size:9.2px;color:#e6f6f8">10:45:38</div>
<div class="t" style="left:609px;top:364.1px;font-size:9.2px;color:#e6f6f8">2025-01-30</div>
<div class="t" style="left:681px;top:364.1px;font-size:9.4px;color:#e6f6f8">ScanInput</div>
<svg style="left:5px;top:390.2px" width="10" height="11" viewBox="0 0 10 11"><rect x="1" y="0" width="8" height="11" rx="1.5" fill="#b9c6dc"/><rect x="0" y="3.5" width="10" height="4" rx="1" fill="#d01c5a"/><path d="M2 5.5 h6" stroke="#f6b0c8" stroke-width="0.7"/></svg>
<div class="t" style="left:25px;top:390.2px;font-size:9.2px;color:#e6f6f8">13</div>
<svg style="left:56px;top:393.2px" width="11" height="6" viewBox="0 0 11 6"><path d="M0 0 h11 l-5.5 6z" fill="#e9d6d6"/></svg>
<svg style="left:75px;top:390.2px" width="16" height="12" viewBox="0 0 16 12"><rect x="0" y="1" width="10" height="8" fill="#3c8c5c"/><path d="M2.5 5 l1.8 1.8 l3.5-3.8" stroke="#b9e6c6" stroke-width="1.1" fill="none"/><rect x="11" y="3" width="4.5" height="6" fill="#5aa74a"/><circle cx="3" cy="10.5" r="1.5" fill="#3b3f8c"/><circle cx="13" cy="10.5" r="1.5" fill="#3b3f8c"/></svg>
<div class="t" style="left:95px;top:390.2px;font-size:9.6px;color:#e6f6f8">Lieferanten</div>
<svg style="left:245px;top:387.2px" width="18" height="18" viewBox="0 0 18 18"><path d="M1.5 16.5 l1.5-5 l9.5-9.5 l3.5 3.5 l-9.5 9.5z" fill="#9a2e6c"/></svg>
<div class="t" style="left:267px;top:384.8px;font-size:9.4px;color:#e6f6f8">Zu</div>
<div class="t" style="left:267px;top:395.2px;font-size:9.4px;color:#e6f6f8">Bearbeiten</div>
<div class="t" style="left:318px;top:390.2px;font-size:9.2px;color:#e6f6f8">1.0</div>
<svg style="left:391px;top:391.2px" width="15" height="11" viewBox="0 0 15 11"><path d="M0 1.5 h5.5 l1.5 1.5 h8 v8 h-15z" fill="#2a78cc"/></svg>
<div class="t" style="left:412px;top:390.2px;font-size:9.6px;color:#e6f6f8">Rechnung</div>
<svg style="left:466px;top:389.8px" width="11" height="13" viewBox="0 0 11 13"><path d="M0.5 0.5 h6.5 l3.5 3.5 v8.5 h-10z" fill="#c9d6e4"/><path d="M7 0.5 v3.5 h3.5" fill="#e8eef4"/></svg>
<div class="t" style="left:485px;top:390.2px;font-size:9.2px;color:#e6f6f8">Ausgang...</div>
<div class="t" style="left:536px;top:384.8px;font-size:9.2px;color:#e6f6f8">2025-02-03</div>
<div class="t" style="left:536px;top:395.2px;font-size:9.2px;color:#e6f6f8">09:12:44</div>
<div class="t" style="left:609px;top:390.2px;font-size:9.2px;color:#e6f6f8">2025-01-30</div>
<div class="t" style="left:681px;top:390.2px;font-size:9.4px;color:#e6f6f8">ScanInput</div>
<svg style="left:5px;top:416.4px" width="10" height="11" viewBox="0 0 10 11"><rect x="1" y="0" width="8" height="11" rx="1.5" fill="#b9c6dc"/><rect x="0" y="3.5" width="10" height="4" rx="1" fill="#d01c5a"/><path d="M2 5.5 h6" stroke="#f6b0c8" stroke-width="0.7"/></svg>
<div class="t" style="left:25px;top:416.4px;font-size:9.2px;color:#e6f6f8">12</div>
<svg style="left:56px;top:419.4px" width="11" height="6" viewBox="0 0 11 6"><path d="M0 0 h11 l-5.5 6z" fill="#e9d6d6"/></svg>
<svg style="left:75px;top:416.4px" width="16" height="12" viewBox="0 0 16 12"><rect x="0" y="1" width="10" height="8" fill="#3c8c5c"/><path d="M2.5 5 l1.8 1.8 l3.5-3.8" stroke="#b9e6c6" stroke-width="1.1" fill="none"/><rect x="11" y="3" width="4.5" height="6" fill="#5aa74a"/><circle cx="3" cy="10.5" r="1.5" fill="#3b3f8c"/><circle cx="13" cy="10.5" r="1.5" fill="#3b3f8c"/></svg>
<div class="t" style="left:95px;top:416.4px;font-size:9.6px;color:#e6f6f8">Lieferanten</div>
<svg style="left:245px;top:413.4px" width="18" height="18" viewBox="0 0 18 18"><path d="M1.5 16.5 l1.5-5 l9.5-9.5 l3.5 3.5 l-9.5 9.5z" fill="#9a2e6c"/></svg>
<div class="t" style="left:267px;top:410.9px;font-size:9.4px;color:#e6f6f8">Zu</div>
<div class="t" style="left:267px;top:421.4px;font-size:9.4px;color:#e6f6f8">Bearbeiten</div>
<div class="t" style="left:318px;top:416.4px;font-size:9.2px;color:#e6f6f8">1.0</div>
<svg style="left:391px;top:417.4px" width="15" height="11" viewBox="0 0 15 11"><path d="M0 1.5 h5.5 l1.5 1.5 h8 v8 h-15z" fill="#2a78cc"/></svg>
<div class="t" style="left:412px;top:416.4px;font-size:9.6px;color:#e6f6f8">Rechnung</div>
<svg style="left:466px;top:415.9px" width="11" height="13" viewBox="0 0 11 13"><path d="M0.5 0.5 h6.5 l3.5 3.5 v8.5 h-10z" fill="#c9d6e4"/><path d="M7 0.5 v3.5 h3.5" fill="#e8eef4"/></svg>
<div class="t" style="left:485px;top:416.4px;font-size:9.2px;color:#e6f6f8">Ausgang...</div>
<div class="t" style="left:536px;top:410.9px;font-size:9.2px;color:#e6f6f8">2025-01-31</div>
<div class="t" style="left:536px;top:421.4px;font-size:9.2px;color:#e6f6f8">08:34:08</div>
<div class="t" style="left:609px;top:416.4px;font-size:9.2px;color:#e6f6f8">2025-01-30</div>
<div class="t" style="left:681px;top:416.4px;font-size:9.4px;color:#e6f6f8">ScanInput</div>
<svg style="left:5px;top:442.5px" width="10" height="11" viewBox="0 0 10 11"><rect x="1" y="0" width="8" height="11" rx="1.5" fill="#b9c6dc"/><rect x="0" y="3.5" width="10" height="4" rx="1" fill="#d01c5a"/><path d="M2 5.5 h6" stroke="#f6b0c8" stroke-width="0.7"/></svg>
<div class="t" style="left:25px;top:442.5px;font-size:9.2px;color:#e6f6f8">11</div>
<svg style="left:56px;top:445.5px" width="11" height="6" viewBox="0 0 11 6"><path d="M0 0 h11 l-5.5 6z" fill="#e9d6d6"/></svg>
<svg style="left:75px;top:442.5px" width="16" height="12" viewBox="0 0 16 12"><rect x="0" y="1" width="10" height="8" fill="#3c8c5c"/><path d="M2.5 5 l1.8 1.8 l3.5-3.8" stroke="#b9e6c6" stroke-width="1.1" fill="none"/><rect x="11" y="3" width="4.5" height="6" fill="#5aa74a"/><circle cx="3" cy="10.5" r="1.5" fill="#3b3f8c"/><circle cx="13" cy="10.5" r="1.5" fill="#3b3f8c"/></svg>
<div class="t" style="left:95px;top:442.5px;font-size:9.6px;color:#e6f6f8">Lieferanten</div>
<svg style="left:245px;top:439.5px" width="18" height="18" viewBox="0 0 18 18"><path d="M1.5 16.5 l1.5-5 l9.5-9.5 l3.5 3.5 l-9.5 9.5z" fill="#9a2e6c"/></svg>
<div class="t" style="left:267px;top:437.0px;font-size:9.4px;color:#e6f6f8">Zu</div>
<div class="t" style="left:267px;top:447.5px;font-size:9.4px;color:#e6f6f8">Bearbeiten</div>
<div class="t" style="left:318px;top:442.5px;font-size:9.2px;color:#e6f6f8">1.0</div>
<svg style="left:391px;top:443.5px" width="15" height="11" viewBox="0 0 15 11"><path d="M0 1.5 h5.5 l1.5 1.5 h8 v8 h-15z" fill="#2a78cc"/></svg>
<div class="t" style="left:412px;top:442.5px;font-size:9.6px;color:#e6f6f8">Rechnung</div>
<svg style="left:466px;top:442.0px" width="11" height="13" viewBox="0 0 11 13"><path d="M0.5 0.5 h6.5 l3.5 3.5 v8.5 h-10z" fill="#c9d6e4"/><path d="M7 0.5 v3.5 h3.5" fill="#e8eef4"/></svg>
<div class="t" style="left:485px;top:442.5px;font-size:9.2px;color:#e6f6f8">Ausgang...</div>
<div class="t" style="left:536px;top:437.0px;font-size:9.2px;color:#e6f6f8">2025-01-30</div>
<div class="t" style="left:536px;top:447.5px;font-size:9.2px;color:#e6f6f8">14:21:24</div>
<div class="t" style="left:609px;top:442.5px;font-size:9.2px;color:#e6f6f8">2025-01-30</div>
<div class="t" style="left:681px;top:442.5px;font-size:9.4px;color:#e6f6f8">ScanInput</div>
<svg style="left:5px;top:468.6px" width="10" height="11" viewBox="0 0 10 11"><rect x="1" y="0" width="8" height="11" rx="1.5" fill="#b9c6dc"/><rect x="0" y="3.5" width="10" height="4" rx="1" fill="#d01c5a"/><path d="M2 5.5 h6" stroke="#f6b0c8" stroke-width="0.7"/></svg>
<div class="t" style="left:25px;top:468.6px;font-size:9.2px;color:#e6f6f8">10</div>
<svg style="left:56px;top:471.6px" width="11" height="6" viewBox="0 0 11 6"><path d="M0 0 h11 l-5.5 6z" fill="#e9d6d6"/></svg>
<svg style="left:75px;top:468.6px" width="16" height="12" viewBox="0 0 16 12"><rect x="0" y="1" width="10" height="8" fill="#3c8c5c"/><path d="M2.5 5 l1.8 1.8 l3.5-3.8" stroke="#b9e6c6" stroke-width="1.1" fill="none"/><rect x="11" y="3" width="4.5" height="6" fill="#5aa74a"/><circle cx="3" cy="10.5" r="1.5" fill="#3b3f8c"/><circle cx="13" cy="10.5" r="1.5" fill="#3b3f8c"/></svg>
<div class="t" style="left:95px;top:468.6px;font-size:9.6px;color:#e6f6f8">Lieferanten</div>
<svg style="left:245px;top:465.6px" width="18" height="18" viewBox="0 0 18 18"><path d="M1.5 16.5 l1.5-5 l9.5-9.5 l3.5 3.5 l-9.5 9.5z" fill="#9a2e6c"/></svg>
<div class="t" style="left:267px;top:463.1px;font-size:9.4px;color:#e6f6f8">Zu</div>
<div class="t" style="left:267px;top:473.6px;font-size:9.4px;color:#e6f6f8">Bearbeiten</div>
<div class="t" style="left:318px;top:468.6px;font-size:9.2px;color:#e6f6f8">1.0</div>
<svg style="left:391px;top:469.6px" width="15" height="11" viewBox="0 0 15 11"><path d="M0 1.5 h5.5 l1.5 1.5 h8 v8 h-15z" fill="#2a78cc"/></svg>
<div class="t" style="left:412px;top:468.6px;font-size:9.6px;color:#e6f6f8">Rechnung</div>
<svg style="left:466px;top:468.1px" width="11" height="13" viewBox="0 0 11 13"><path d="M0.5 0.5 h6.5 l3.5 3.5 v8.5 h-10z" fill="#c9d6e4"/><path d="M7 0.5 v3.5 h3.5" fill="#e8eef4"/></svg>
<div class="t" style="left:485px;top:468.6px;font-size:9.2px;color:#e6f6f8">Ausgang...</div>
<div class="t" style="left:536px;top:463.1px;font-size:9.2px;color:#e6f6f8">2025-01-30</div>
<div class="t" style="left:536px;top:473.6px;font-size:9.2px;color:#e6f6f8">14:04:30</div>
<div class="t" style="left:609px;top:468.6px;font-size:9.2px;color:#e6f6f8">2025-01-30</div>
<div class="t" style="left:681px;top:468.6px;font-size:9.4px;color:#e6f6f8">klaes</div>
<svg style="left:5px;top:494.8px" width="10" height="11" viewBox="0 0 10 11"><rect x="1" y="0" width="8" height="11" rx="1.5" fill="#b9c6dc"/><rect x="0" y="3.5" width="10" height="4" rx="1" fill="#d01c5a"/><path d="M2 5.5 h6" stroke="#f6b0c8" stroke-width="0.7"/></svg>
<div class="t" style="left:25px;top:494.8px;font-size:9.2px;color:#e6f6f8">9</div>
<svg style="left:56px;top:497.8px" width="11" height="6" viewBox="0 0 11 6"><path d="M0 0 h11 l-5.5 6z" fill="#e9d6d6"/></svg>
<svg style="left:75px;top:494.8px" width="16" height="12" viewBox="0 0 16 12"><rect x="0" y="1" width="10" height="8" fill="#3c8c5c"/><path d="M2.5 5 l1.8 1.8 l3.5-3.8" stroke="#b9e6c6" stroke-width="1.1" fill="none"/><rect x="11" y="3" width="4.5" height="6" fill="#5aa74a"/><circle cx="3" cy="10.5" r="1.5" fill="#3b3f8c"/><circle cx="13" cy="10.5" r="1.5" fill="#3b3f8c"/></svg>
<div class="t" style="left:95px;top:494.8px;font-size:9.6px;color:#e6f6f8">Lieferanten</div>
<svg style="left:245px;top:491.8px" width="18" height="18" viewBox="0 0 18 18"><path d="M1.5 16.5 l1.5-5 l9.5-9.5 l3.5 3.5 l-9.5 9.5z" fill="#9a2e6c"/></svg>
<div class="t" style="left:267px;top:489.3px;font-size:9.4px;color:#e6f6f8">Zu</div>
<div class="t" style="left:267px;top:499.8px;font-size:9.4px;color:#e6f6f8">Bearbeiten</div>
<div class="t" style="left:318px;top:494.8px;font-size:9.2px;color:#e6f6f8">1.0</div>
<svg style="left:391px;top:495.8px" width="15" height="11" viewBox="0 0 15 11"><path d="M0 1.5 h5.5 l1.5 1.5 h8 v8 h-15z" fill="#2a78cc"/></svg>
<div class="t" style="left:412px;top:494.8px;font-size:9.6px;color:#e6f6f8">Rechnung</div>
<svg style="left:466px;top:494.3px" width="11" height="13" viewBox="0 0 11 13"><path d="M0.5 0.5 h6.5 l3.5 3.5 v8.5 h-10z" fill="#c9d6e4"/><path d="M7 0.5 v3.5 h3.5" fill="#e8eef4"/></svg>
<div class="t" style="left:485px;top:494.8px;font-size:9.2px;color:#e6f6f8">Ausgang...</div>
<div class="t" style="left:536px;top:489.3px;font-size:9.2px;color:#e6f6f8">2025-01-30</div>
<div class="t" style="left:536px;top:499.8px;font-size:9.2px;color:#e6f6f8">13:53:41</div>
<div class="t" style="left:609px;top:494.8px;font-size:9.2px;color:#e6f6f8">2025-01-30</div>
<div class="t" style="left:681px;top:494.8px;font-size:9.4px;color:#e6f6f8">klaes</div>
</div>
<svg style="left:980px;top:763px;" width="14" height="14" viewBox="0 0 14 14"><rect x="0.8" y="0.8" width="4.5" height="6.5" fill="none" stroke="#d8f0f2" stroke-width="1.2"/><rect x="7.8" y="0.8" width="4.5" height="3" fill="none" stroke="#d8f0f2" stroke-width="1.2"/><rect x="0.8" y="9.2" width="4.5" height="3" fill="none" stroke="#d8f0f2" stroke-width="1.2"/><rect x="7.8" y="5.8" width="4.5" height="6.5" fill="none" stroke="#d8f0f2" stroke-width="1.2"/></svg>
<div class="a" style="left:1000px;top:272px;width:9px;height:513px;background:#f4f4f4;"></div>
<div class="a" style="left:1001px;top:511px;width:4px;height:272px;background:#62b2b8;border-radius:2px"></div>
<div class="a" style="left:270px;top:785px;width:739px;height:8px;background:#f3f3f3;"></div>
<div class="a" style="left:653px;top:787px;width:346px;height:4px;background:#d6d6d6;"></div>
<div class="a" style="left:272px;top:787px;width:381px;height:4px;background:#63aeb2;border-radius:2px"></div>
<div class="a" style="left:1008px;top:133px;width:2px;height:660px;background:#fafafa;"></div>
<div class="t" style="left:1016px;top:138px;font-size:9.5px;color:#0a9fb0;font-weight:bold;">Vorschau</div>
<svg style="left:1364px;top:138px;" width="12" height="12" viewBox="0 0 12 12"><path d="M5 1.5 H1.5 V10.5 H10.5 V7" fill="none" stroke="#1aa3ae" stroke-width="1.3"/><path d="M6 6 L10.5 1.5 M7 1.2 H10.8 V5" fill="none" stroke="#1aa3ae" stroke-width="1.3"/></svg>
<svg style="left:1381px;top:139px;" width="10" height="10" viewBox="0 0 10 10"><path d="M0 0 L10 10 M10 0 L0 10" stroke="#1aa3ae" stroke-width="1.4"/></svg>
<div class="a" style="left:1010px;top:156px;width:6px;height:483px;background:#dedede;"></div>
<div class="a" style="left:1388px;top:156px;width:7px;height:483px;background:#e2e2e2;"></div>
<div class="t" style="left:1016px;top:172px;font-size:17px;color:#d2d2d2;height:20px;line-height:20px;top:168px"><span style="font-size:17px;letter-spacing:0.5px">89</span></div>
<div class="t" style="left:1237px;top:159px;font-size:7px;color:#333;font-weight:bold;">Original</div>
<div class="t" style="left:1236.5px;top:181px;font-size:13px;color:#9c9c9c;font-weight:bold;letter-spacing:0px;height:14px;line-height:14px;top:180px">KLAES</div>
<div class="t" style="left:1237px;top:189.5px;font-size:2.4px;color:#999;font-weight:bold;">WORLDWIDE NO.1</div>
<svg style="left:1283px;top:175px;" width="26" height="22" viewBox="0 0 26 22"><path d="M11 0 L20.5 9 L11 18 L1.5 9z" fill="#1a98a2"/><circle cx="10.5" cy="8.5" r="1.8" fill="#fff"/><path d="M17 11 v9 M13.5 11.5 h9" stroke="#31aeb8" stroke-width="1.8"/></svg>
<div class="t" style="left:1271px;top:192.5px;font-size:6.5px;color:#2aaab4;font-weight:bold;font-style:italic">enjoy</div>
<svg style="left:1262px;top:199px;" width="46" height="8" viewBox="0 0 46 8"><path d="M0 7 C15 1 30 0 46 2" stroke="#c8e8ec" stroke-width="2" fill="none"/></svg>
<div class="t" style="left:1050px;top:239px;font-size:4.97px;color:#333;"><u>Horst Klaes GmbH &amp; Co.KG - Wilhelmstraße 85-87 - Bad Neuenahr Ahrweiler</u></div>
<div class="t" style="left:1050px;top:246.5px;font-size:6.1px;color:#333;">Herr</div>
<div class="t" style="left:1050px;top:253.3px;font-size:6.1px;color:#333;">Josef Bachmayer</div>
<div class="t" style="left:1050px;top:260.1px;font-size:6.1px;color:#333;">GmbH &amp; Co.KG</div>
<div class="t" style="left:1050px;top:266.9px;font-size:6.1px;color:#333;">Abteilung Bauwesen</div>
<div class="t" style="left:1050px;top:273.7px;font-size:6.1px;color:#333;">Ansbacher Straße&nbsp; 66</div>
<div class="t" style="left:1050px;top:280.5px;font-size:6.1px;color:#333;">91598 ANSBACH</div>
<div class="t" style="left:1241px;top:239px;font-size:4.97px;color:#333;">Ahrweiler, am 18.11.2025</div>
<div class="t" style="left:1241px;top:282px;font-size:5.0px;color:#222;font-weight:bold;">Bauvorhaben:</div>
<div class="t" style="left:1241px;top:288px;font-size:5.0px;color:#444;">ecoDMS Webinar 18.11.2025</div>
<div class="t" style="left:1241px;top:322px;font-size:5.0px;color:#333;"><b>gültig bis:</b> 29.12.2025</div>
<div class="t" style="left:1241px;top:334px;font-size:5.0px;color:#333;"><b>Belegdatum</b>&nbsp;&nbsp;&nbsp;&nbsp;&nbsp;&nbsp;&nbsp;&nbsp;: 18.11.2025</div>
<div class="t" style="left:1241px;top:339.6px;font-size:5.0px;color:#333;"><b>Seite</b>&nbsp;&nbsp;&nbsp;&nbsp;&nbsp;&nbsp;&nbsp;&nbsp;&nbsp;&nbsp;&nbsp;&nbsp;&nbsp;&nbsp;&nbsp;&nbsp;&nbsp;&nbsp;: 1 von 3</div>
<div class="t" style="left:1050px;top:338px;font-size:8.4px;color:#222;font-weight:bold;">Angebot : AG254701 <span style="font-weight:normal">/</span> <span style="font-size:4.6px;font-weight:normal;color:#555">Vorgang : VG-25114701</span></div>
<div class="t" style="left:1050px;top:346px;font-size:6.1px;color:#333;">Währungsfaktor: 1</div>
<div class="t" style="left:1050px;top:369px;font-size:5.0px;color:#222;font-weight:bold;">Lieferadresse:</div>
<div class="t" style="left:1050px;top:375.6px;font-size:6.1px;color:#333;">Josef Bachmayer</div>
<div class="t" style="left:1050px;top:385.5px;font-size:5.0px;color:#222;font-weight:bold;">Sachbearbeiter:</div>
<div class="t" style="left:1050px;top:391px;font-size:4.9px;color:#444;">Systemadministrator</div>
<div class="t" style="left:1140px;top:368.4px;font-size:5.0px;color:#333;"><b>Liefer-Straße:</b></div>
<div class="t" style="left:1140px;top:374px;font-size:5.0px;color:#333;">Birkenstraße 1</div>
<div class="t" style="left:1140px;top:385.5px;font-size:5.0px;color:#333;"><b>Architektenkontakt:</b></div>
<div class="t" style="left:1140px;top:391.3px;font-size:5.0px;color:#333;">Tel.&nbsp;&nbsp;&nbsp; : +49 (4721) 54 65 890</div>
<div class="t" style="left:1140px;top:396.7px;font-size:5.0px;color:#333;">Mobil :</div>
<div class="t" style="left:1140px;top:402.5px;font-size:5.0px;color:#333;">Mail&nbsp;&nbsp; : astyle@style.com</div>
<div class="t" style="left:1140px;top:407.9px;font-size:5.0px;color:#333;">Mail&nbsp;&nbsp; : +49 (4721) 54 65 890-77</div>
<div class="t" style="left:1140px;top:413.7px;font-size:5.0px;color:#333;"><b>Kunde:</b> Josef Bachmayer</div>
<div class="t" style="left:1140px;top:419.3px;font-size:5.0px;color:#333;"><b>Kundenkontakt:</b></div>
<div class="t" style="left:1140px;top:425px;font-size:5.0px;color:#333;">Nr.Int. : KI_1234567890</div>
<div class="t" style="left:1140px;top:430.5px;font-size:5.0px;color:#333;">Tel.&nbsp;&nbsp;&nbsp; : +49 (981) 23 05 99</div>
<div class="t" style="left:1140px;top:436px;font-size:5.0px;color:#333;">Mobil : +49 (171) 12 05 889</div>
<div class="t" style="left:1140px;top:441.7px;font-size:5.0px;color:#333;">Mail&nbsp;&nbsp;&nbsp;&nbsp;&nbsp;&nbsp;&nbsp; : jbachmayer@t-online.de</div>
<div class="t" style="left:1241px;top:368.4px;font-size:5.0px;color:#333;"><b>Liefer-Ort:</b></div>
<div class="t" style="left:1241px;top:374px;font-size:5.0px;color:#333;">91598 Ansbach</div>
<div class="t" style="left:1241px;top:385.5px;font-size:5.0px;color:#333;"><b>Ihr Ansprechpartner:</b></div>
<div class="t" style="left:1241px;top:391px;font-size:5.0px;color:#333;">Georg Mittermayer</div>
<div class="t" style="left:1241px;top:396.7px;font-size:5.0px;color:#333;">Tel.&nbsp;&nbsp;&nbsp; : +49 (5357) 55 88 977</div>
<div class="t" style="left:1241px;top:402.5px;font-size:5.0px;color:#333;">Mobil : +49 (172) 59 732 44</div>
<div class="t" style="left:1241px;top:407.9px;font-size:5.0px;color:#333;">Mail&nbsp;&nbsp; : gmittermayer@egberg.com</div>
<div class="t" style="left:1050px;top:465.2px;font-size:6.1px;color:#333;">Sehr geehrter Herr Bachmayer,</div>
<div class="t" style="left:1050px;top:478.5px;font-size:6.07px;color:#333;">wir bedanken uns für Ihre Anfrage und unterbreiten Ihnen unser Angebot über unsere Klaes Qualitätsfenster.</div>
<div class="t" style="left:1050px;top:492.5px;font-size:6.1px;color:#888;">Klaes SICHERHEITSFENSTER aus KUNSTSTOFF</div>
<svg style="left:1077px;top:512px;" width="32" height="52" viewBox="0 0 32 52"><path d="M1 4.6 L29.4 1.6 L29 38.7 L3.6 48.4z" fill="none" stroke="#8c8c8c" stroke-width="2.6"/><path d="M15.5 3.2 L16.3 43.8 M2.2 20 L29.2 16.5" stroke="#8c8c8c" stroke-width="2"/><path d="M3 6 L4.5 47" stroke="#6e6e6e" stroke-width="0.8"/></svg>
<svg style="left:1136px;top:508px;" width="50" height="57" viewBox="0 0 50 57"><path d="M23.7 2 L45.6 2 L45.6 35.7 L19.8 47z" fill="#e4eaf0" stroke="#b8c0c8" stroke-width="0.8"/><path d="M19.8 12 L23.7 2 M19.8 12 V47" stroke="#c0c8d0" stroke-width="1"/><path d="M45.6 2 V35.7 L20.5 47" fill="none" stroke="#4a4a4a" stroke-width="1.6"/><path d="M24 30 L44 20 M24 33 L44 23" stroke="#a8b8c8" stroke-width="0.6"/><path d="M2 8 H17 M2 15.5 H17 M2 38.5 H15 M2 54 H12 L20 46" stroke="#999" stroke-width="0.9" fill="none"/><path d="M2 31.5 H15" stroke="#d8a0a0" stroke-width="0.9"/><path d="M34 44 L37 46 H47 M28 49 L33 50.5 H47" stroke="#999" stroke-width="0.8" fill="none"/></svg>
<div class="t" style="left:1067px;top:567px;font-size:6.1px;color:#777;font-weight:bold;">Modell KLAESklar</div>
<div class="a" style="left:1059px;top:580.0px;width:2px;height:2px;background:#222;border-radius:1px"></div>
<div class="t" style="left:1070px;top:575.0px;font-size:6.1px;color:#222;">6-Kammer-Isolierprofil mit 71 mm bzw. 80 mm Bautiefe</div>
<div class="a" style="left:1059px;top:587.2px;width:2px;height:2px;background:#222;border-radius:1px"></div>
<div class="t" style="left:1070px;top:582.2px;font-size:6.1px;color:#222;">Generelle Stahlaussteifung 2mm</div>
<div class="a" style="left:1059px;top:594.4px;width:2px;height:2px;background:#222;border-radius:1px"></div>
<div class="t" style="left:1070px;top:589.4px;font-size:6.1px;color:#222;">Zwei formstabile, umlaufende Dichtungen mit sehr hohem Rückstellvermögen</div>
<div class="a" style="left:1059px;top:601.6px;width:2px;height:2px;background:#222;border-radius:1px"></div>
<div class="t" style="left:1070px;top:596.6px;font-size:6.1px;color:#222;">Einzigartige Optik durch völlig verdeckt liegende Sicherheits-Bänder (patentiert)</div>
<div class="a" style="left:1059px;top:608.8px;width:2px;height:2px;background:#222;border-radius:1px"></div>
<div class="t" style="left:1070px;top:603.8px;font-size:6.1px;color:#222;">RAL-Gütezeichen auf das komplette KLAES-Klar-Profil-Fenster</div>
<div class="t" style="left:1188px;top:614px;font-size:4.97px;color:#555;">Seite 1 von 3</div>
<div class="a" style="left:1123.1px;top:598.7px;width:27.6px;height:27.6px;border-radius:50%;background:rgba(128,128,128,.82);box-shadow:0 2px 3px rgba(0,0,0,.25)"></div>
<div class="a" style="left:1155.0px;top:598.7px;width:27.6px;height:27.6px;border-radius:50%;background:rgba(128,128,128,.82);box-shadow:0 2px 3px rgba(0,0,0,.25)"></div>
<div class="a" style="left:1221.8px;top:598.7px;width:27.6px;height:27.6px;border-radius:50%;background:#1ea6b1;box-shadow:0 2px 3px rgba(0,0,0,.25)"></div>
<div class="a" style="left:1253.7px;top:598.7px;width:27.6px;height:27.6px;border-radius:50%;background:#1ea6b1;box-shadow:0 2px 3px rgba(0,0,0,.25)"></div>
<div class="a" style="left:1186px;top:600px;width:31.5px;height:24.5px;border-radius:12px;background:#1ea6b1;box-shadow:0 2px 3px rgba(0,0,0,.2)"></div>
<svg style="left:1130px;top:607px;" width="13" height="11" viewBox="0 0 13 11"><path d="M1.5 0.5 v10" stroke="#fff" stroke-width="1.8"/><path d="M10 1 L5 5.5 L10 10" stroke="#fff" stroke-width="1.8" fill="none"/></svg>
<svg style="left:1165px;top:607px;" width="7" height="11" viewBox="0 0 7 11"><path d="M6 1 L1.5 5.5 L6 10" stroke="#fff" stroke-width="1.8" fill="none"/></svg>
<div class="t" style="left:1101.8px;top:606.5px;font-size:11px;color:#f4fbfc;font-weight:bold;width:200px;text-align:center;">1/3</div>
<svg style="left:1232px;top:607px;" width="7" height="11" viewBox="0 0 7 11"><path d="M1 1 L5.5 5.5 L1 10" stroke="#fff" stroke-width="1.8" fill="none"/></svg>
<svg style="left:1261px;top:607px;" width="13" height="11" viewBox="0 0 13 11"><path d="M1.5 1 L6 5.5 L1.5 10" stroke="#fff" stroke-width="1.8" fill="none"/><path d="M10.5 0.5 v10" stroke="#fff" stroke-width="1.8"/></svg>
<div class="a" style="left:1358.5px;top:163.0px;width:29px;height:29px;border-radius:50%;background:#22a5b0;box-shadow:0 2px 4px rgba(0,0,0,.3)"></div>
<div class="a" style="left:1358.5px;top:198.0px;width:29px;height:29px;border-radius:50%;background:#22a5b0;box-shadow:0 2px 4px rgba(0,0,0,.3)"></div>
<div class="a" style="left:1358.5px;top:233.0px;width:29px;height:29px;border-radius:50%;background:#22a5b0;box-shadow:0 2px 4px rgba(0,0,0,.3)"></div>
<svg style="left:1367px;top:171.5px;" width="12" height="12" viewBox="0 0 12 12"><path d="M0.8 4 V0.8 H4 M8 0.8 H11.2 V4 M11.2 8 V11.2 H8 M4 11.2 H0.8 V8" stroke="#fff" stroke-width="1.6" fill="none"/></svg>
<svg style="left:1366px;top:205.5px;" width="14" height="14" viewBox="0 0 14 14"><path d="M1.5 12.5 l0.8-3.2 l8-8 l2.4 2.4 l-8 8z" fill="none" stroke="#fff" stroke-width="1.6"/></svg>
<svg style="left:1365px;top:240.5px;" width="15" height="13" viewBox="0 0 15 13"><rect x="0.8" y="0.8" width="13.4" height="11.4" fill="none" stroke="#fff" stroke-width="1.6"/><rect x="7" y="6.5" width="6" height="4.5" fill="#fff"/></svg>
<div class="a" style="left:1016px;top:639px;width:372px;height:1px;background:#dcdcdc;"></div>
<div class="a" style="left:1193px;top:638px;width:19px;height:2px;background:#7cc0c5;"></div>
<div class="a" style="left:1016px;top:640px;width:379px;height:42px;background:#f7f7f7;"></div>
<div class="a" style="left:1016px;top:682px;width:379px;height:73px;background:#fff;"></div>
<div class="a" style="left:1016px;top:755px;width:379px;height:38px;background:linear-gradient(#fff,#f2f2f2 40%,#dcdcdc)"></div>
<div class="t" style="left:1028px;top:665px;font-size:9.6px;color:#9a9a9a;">ivitäten</div>
<div class="a" style="left:1016px;top:640px;width:14px;height:40px;background:#f8f8f8;"></div>
<div class="t" style="left:988px;top:665px;font-size:9.6px;color:#9a9a9a;width:200px;text-align:center;">Notizen</div>
<div class="t" style="left:1035.5px;top:665px;font-size:9.6px;color:#9a9a9a;width:200px;text-align:center;">Aktionen</div>
<div class="t" style="left:1088px;top:665px;font-size:9.6px;color:#1aa8b4;width:200px;text-align:center;">Versionen</div>
<div class="t" style="left:1148px;top:665px;font-size:9.6px;color:#9a9a9a;width:200px;text-align:center;">Geschwärzt</div>
<svg style="left:1032px;top:648px;" width="14" height="14" viewBox="0 0 14 14"><circle cx="7" cy="7" r="6" fill="none" stroke="#aaa" stroke-width="1.4" stroke-dasharray="2 1.5"/><path d="M5 3.5 L7 7 L9.5 8" stroke="#aaa" stroke-width="1.2" fill="none"/></svg>
<svg style="left:1081px;top:649px;" width="15" height="13" viewBox="0 0 15 13"><path d="M0.8 0.8 H10 L14.2 5 V12.2 H0.8z" fill="none" stroke="#999" stroke-width="1.5"/></svg>
<svg style="left:1129px;top:648px;" width="14" height="14" viewBox="0 0 14 14"><circle cx="11.5" cy="2.5" r="2" fill="none" stroke="#999" stroke-width="1.1"/><circle cx="2.5" cy="7" r="2" fill="none" stroke="#999" stroke-width="1.1"/><circle cx="11.5" cy="11.5" r="2" fill="none" stroke="#999" stroke-width="1.1"/><path d="M9.8 3.4 L4.2 6.1 M4.2 7.9 L9.8 10.6" stroke="#999" stroke-width="1.1"/></svg>
<svg style="left:1181px;top:650px;" width="15" height="12" viewBox="0 0 15 12"><path d="M4 1 H14 M4 5.5 H14 M4 10 H14" stroke="#1aa8b4" stroke-width="1.6"/><path d="M0.5 1 H2 M0.5 5.5 H2 M0.5 10 H2" stroke="#1aa8b4" stroke-width="1.6"/></svg>
<svg style="left:1240px;top:649px;" width="16" height="13" viewBox="0 0 16 13"><rect x="0.8" y="0.8" width="14.4" height="11.4" rx="1" fill="none" stroke="#999" stroke-width="1.5"/><rect x="8" y="6.5" width="5" height="3.5" fill="#999"/></svg>
<svg style="left:1371px;top:659px;" width="8" height="5" viewBox="0 0 8 5"><path d="M0 0 h8 l-4 4.5z" fill="#333"/></svg>
<div class="a" style="left:1017px;top:687.5px;width:35px;height:20px;background:#ececec;"></div>
<div class="a" style="left:1054px;top:687.5px;width:85px;height:20px;background:#ececec;"></div>
<div class="a" style="left:1141px;top:687.5px;width:85px;height:20px;background:#ececec;"></div>
<div class="a" style="left:1228px;top:687.5px;width:156px;height:20px;background:#ececec;"></div>
<div class="t" style="left:934.5px;top:691.5px;font-size:9.8px;color:#555;width:200px;text-align:center;">ID↓</div>
<div class="t" style="left:996.5px;top:691.5px;font-size:9.8px;color:#555;width:200px;text-align:center;">Datum</div>
<div class="t" style="left:1083.5px;top:691.5px;font-size:9.8px;color:#555;width:200px;text-align:center;">Benutzer</div>
<div class="t" style="left:1234.5px;top:691.5px;font-size:9.8px;color:#555;">Bemerkung</div>
<div class="t" style="left:1031px;top:715px;font-size:9.8px;color:#555;">1</div>
<div class="t" style="left:1057px;top:715px;font-size:9.8px;color:#555;">2025-11-18&nbsp; 07:58</div>
<div class="t" style="left:1172px;top:715px;font-size:9.8px;color:#555;">klaes</div>
<div class="a" style="left:1359px;top:755px;width:28px;height:28px;border-radius:50%;background:#22a5b0;box-shadow:0 2px 4px rgba(0,0,0,.3)"></div>
<svg style="left:1365px;top:761px;" width="16" height="16" viewBox="0 0 16 16"><circle cx="8" cy="8" r="6.8" fill="none" stroke="#fff" stroke-width="1.6"/><path d="M8 4 v8 M4 8 h8" stroke="#fff" stroke-width="1.8"/></svg>
<div class="a" style="left:438px;top:457px;width:273px;height:189px;background:#424141;box-shadow:1px 2px 4px rgba(0,0,0,.35)"></div>
<div class="a" style="left:441px;top:560px;width:266px;height:17px;background:#009aa6;"></div>
<svg style="left:443px;top:462.8px;" width="12" height="11" viewBox="0 0 12 11"><path d="M0 1 h4.5 l1.2 1.2 h5.3 v7.8 h-11z" fill="#f4f4f4"/><circle cx="7" cy="6" r="1.2" fill="#424141"/></svg>
<div class="t" style="left:459.5px;top:462.3px;font-size:9.1px;color:#f2f2f2;">Zum Ordner springen ...</div>
<div class="t" style="left:617.5px;top:462.3px;font-size:9.1px;color:#efefef;">Strg+Alt+O</div>
<svg style="left:443px;top:479.48px;" width="12" height="11" viewBox="0 0 12 11"><rect x="2.5" y="0" width="6" height="2.5" fill="#f4f4f4"/><rect x="0" y="3" width="11" height="5" rx="1" fill="#f4f4f4"/><rect x="2.5" y="6" width="6" height="4" fill="#f4f4f4" stroke="#424141" stroke-width="0.8"/></svg>
<div class="t" style="left:459.5px;top:478.98px;font-size:9.1px;color:#f2f2f2;">Drucken ...</div>
<div class="t" style="left:617.5px;top:478.98px;font-size:9.1px;color:#efefef;">Strg+P</div>
<svg style="left:443px;top:496.16px;" width="12" height="11" viewBox="0 0 12 11"><circle cx="5.5" cy="6" r="4" fill="none" stroke="#ddd" stroke-width="1.2"/><path d="M5.5 4 v2 l1.5 1" stroke="#ddd" stroke-width="0.9" fill="none"/><path d="M1 2 l2-1.5 M10 2 l-2-1.5" stroke="#ddd" stroke-width="1.2"/></svg>
<div class="t" style="left:459.5px;top:495.66px;font-size:9.1px;color:#f2f2f2;">Wiedervorlage setzen ...</div>
<div class="t" style="left:617.5px;top:495.66px;font-size:9.1px;color:#efefef;">Strg+Z</div>
<svg style="left:443px;top:512.84px;" width="12" height="11" viewBox="0 0 12 11"><rect x="2.5" y="0.5" width="6" height="10" rx="0.8" fill="#f4f4f4"/><rect x="4.5" y="4.5" width="2" height="2.5" fill="#424141"/></svg>
<div class="t" style="left:459.5px;top:512.34px;font-size:9.1px;color:#f2f2f2;">In den Papierkorb verschieben</div>
<div class="t" style="left:617.5px;top:512.34px;font-size:9.1px;color:#efefef;">Strg+Entf</div>
<svg style="left:443px;top:529.52px;" width="12" height="11" viewBox="0 0 12 11"><circle cx="5.5" cy="5.5" r="4.3" fill="none" stroke="#ddd" stroke-width="1.2"/><path d="M5.5 3 v2.5 l2 1.2" stroke="#ddd" stroke-width="1" fill="none"/></svg>
<div class="t" style="left:459.5px;top:529.02px;font-size:9.1px;color:#f2f2f2;">Fristen...</div>
<svg style="left:443px;top:546.2px;" width="12" height="11" viewBox="0 0 12 11"><path d="M2.3 3 A4.5 4.5 0 1 1 1.3 6" fill="none" stroke="#ddd" stroke-width="1.3"/><path d="M0 3 L3 3.5 L2.2 0.5z" fill="#ddd"/><path d="M6 3.5 v2.5 l1.8 1" stroke="#ddd" stroke-width="1" fill="none"/></svg>
<div class="t" style="left:459.5px;top:545.7px;font-size:9.1px;color:#f2f2f2;">Aktivitäten ...</div>
<div class="t" style="left:617.5px;top:545.7px;font-size:9.1px;color:#efefef;">Strg+H</div>
<svg style="left:443px;top:562.88px;" width="12" height="11" viewBox="0 0 12 11"><circle cx="9" cy="1.8" r="1.7" fill="#fff"/><circle cx="1.8" cy="5.5" r="1.7" fill="#fff"/><circle cx="9" cy="9.2" r="1.7" fill="#fff"/><path d="M9 1.8 L1.8 5.5 L9 9.2" stroke="#fff" stroke-width="1" fill="none"/></svg>
<div class="t" style="left:459.5px;top:562.38px;font-size:9.1px;color:#f2f2f2;">Aktionen</div>
<svg style="left:443px;top:579.56px;" width="12" height="11" viewBox="0 0 12 11"><rect x="1" y="1.5" width="9" height="9.5" rx="1" fill="#f4f4f4"/><path d="M3 4.5 h5 M3 6.5 h5 M3 8.5 h3.5" stroke="#424141" stroke-width="0.9"/><rect x="3.5" y="0" width="4" height="2" fill="#f4f4f4"/></svg>
<div class="t" style="left:459.5px;top:579.06px;font-size:9.1px;color:#f2f2f2;">Klassifizieren ...</div>
<div class="t" style="left:617.5px;top:579.06px;font-size:9.1px;color:#efefef;">Strg+K</div>
<svg style="left:443px;top:596.24px;" width="12" height="11" viewBox="0 0 12 11"><rect x="0.5" y="3" width="7.5" height="8" rx="0.8" fill="none" stroke="#ccc" stroke-width="1"/><rect x="3" y="0.5" width="7.5" height="8.5" rx="0.8" fill="#e8e8e8"/><path d="M5 3 h4 M5 5 h4" stroke="#424141" stroke-width="0.8"/></svg>
<div class="t" style="left:459.5px;top:595.74px;font-size:9.1px;color:#f2f2f2;">Massenklassifizierung ...</div>
<div class="t" style="left:617.5px;top:595.74px;font-size:9.1px;color:#efefef;">Strg+, Umschalt+, K</div>
<svg style="left:443px;top:612.9200000000001px;" width="12" height="11" viewBox="0 0 12 11"><circle cx="5.5" cy="5.5" r="4" fill="none" stroke="#ddd" stroke-width="1.2"/><circle cx="5.5" cy="5.5" r="2" fill="#eee"/><path d="M5.5 0 v1.5 M5.5 9.5 v1.5 M0 5.5 h1.5 M9.5 5.5 h1.5" stroke="#ddd" stroke-width="1"/></svg>
<div class="t" style="left:459.5px;top:612.4200000000001px;font-size:9.1px;color:#f2f2f2;">Vorlagen bearbeiten ...</div>
<svg style="left:443px;top:629.6px;" width="12" height="11" viewBox="0 0 12 11"><path d="M0 5 h3.5 M1.75 3.25 v3.5" stroke="#fff" stroke-width="1.1"/><circle cx="6.5" cy="3" r="1.9" fill="#fff"/><circle cx="10" cy="3.3" r="1.6" fill="#fff"/><path d="M3.5 10 C3.5 7 5 6.3 6.5 6.3 C8 6.3 9.5 7 9.5 10z M9 6.3 C11 6.3 12.5 7 12.5 10 h-2.5z" fill="#fff"/></svg>
<div class="t" style="left:459.5px;top:629.1px;font-size:9.1px;color:#f2f2f2;">Kenntnisnahme &amp; Freigabe...</div>
<svg style="left:697px;top:565px;" width="4" height="6" viewBox="0 0 4 6"><path d="M0 0 l3.5 3 l-3.5 3z" fill="#e8f8f8"/></svg>
<div class="a" style="left:707.5px;top:557px;width:325.5px;height:122px;background:#424141;box-shadow:1px 2px 4px rgba(0,0,0,.35)"></div>
<div class="a" style="left:710px;top:593px;width:320px;height:17px;background:#009aa6;"></div>
<svg style="left:712px;top:562.5px;" width="12" height="11" viewBox="0 0 12 11"><path d="M0 5 C2 1.5 9 1.5 11 5 C9 8.5 2 8.5 0 5z" fill="#f4f4f4"/><circle cx="5.5" cy="5" r="2" fill="#424141"/><circle cx="5.5" cy="5" r="1" fill="#f4f4f4"/></svg>
<div class="t" style="left:728px;top:562.0px;font-size:9.1px;color:#f2f2f2;">Anzeigen</div>
<div class="t" style="left:948px;top:562.0px;font-size:9.1px;color:#efefef;">Strg+S</div>
<svg style="left:712px;top:579.18px;" width="12" height="11" viewBox="0 0 12 11"><path d="M4 0 h3 v4 h2.5 l-4 4 l-4-4 h2.5z" fill="#f4f4f4"/><rect x="1" y="9.5" width="9" height="1.3" fill="#f4f4f4"/></svg>
<div class="t" style="left:728px;top:578.68px;font-size:9.1px;color:#f2f2f2;">Download ...</div>
<div class="t" style="left:948px;top:578.68px;font-size:9.1px;color:#efefef;">Strg+E</div>
<svg style="left:712px;top:595.86px;" width="12" height="11" viewBox="0 0 12 11"><rect x="0.6" y="0.6" width="9.8" height="9.8" rx="1" fill="none" stroke="#9fd8dc" stroke-width="1.1"/><rect x="3" y="3" width="5" height="4.5" fill="none" stroke="#9fd8dc" stroke-width="0.9"/></svg>
<div class="t" style="left:728px;top:595.36px;font-size:9.1px;color:#bfe9ec;">Originale exportieren...</div>
<div class="t" style="left:948px;top:595.36px;font-size:9.1px;color:#e8f6f7;">Strg+Umschalt+E</div>
<svg style="left:712px;top:612.54px;" width="12" height="11" viewBox="0 0 12 11"><rect x="0" y="1" width="11" height="8.5" rx="0.8" fill="#f4f4f4"/><path d="M0.5 2 L5.5 5.5 L10.5 2" stroke="#424141" stroke-width="1" fill="none"/></svg>
<div class="t" style="left:728px;top:612.04px;font-size:9.1px;color:#f2f2f2;">Dokument per E-Mail senden ...</div>
<div class="t" style="left:948px;top:612.04px;font-size:9.1px;color:#efefef;">Strg+M</div>
<svg style="left:712px;top:629.22px;" width="12" height="11" viewBox="0 0 12 11"><rect x="1" y="1.5" width="9" height="9.5" rx="1" fill="none" stroke="#ddd" stroke-width="1.2"/><rect x="3.5" y="0" width="4" height="2.2" fill="#ddd"/><path d="M3.5 8 h4" stroke="#ddd" stroke-width="1"/></svg>
<div class="t" style="left:728px;top:628.72px;font-size:9.1px;color:#f2f2f2;">Internen Link in die Zwischenablage kopieren</div>
<div class="t" style="left:948px;top:628.72px;font-size:9.1px;color:#efefef;">Strg+Alt+L</div>
<svg style="left:712px;top:645.9px;" width="12" height="11" viewBox="0 0 12 11"><rect x="0" y="1" width="11" height="9" rx="0.8" fill="#f4f4f4"/><path d="M0.5 2 L5.5 5.5 L10.5 2 M1 9.5 L4.5 6 M10 9.5 L6.5 6" stroke="#424141" stroke-width="1" fill="none"/></svg>
<div class="t" style="left:728px;top:645.4px;font-size:9.1px;color:#f2f2f2;">Internen Link per E-Mail versenden</div>
<div class="t" style="left:948px;top:645.4px;font-size:9.1px;color:#efefef;">Strg+Alt+M</div>
<svg style="left:712px;top:662.58px;" width="12" height="11" viewBox="0 0 12 11"><circle cx="9" cy="1.8" r="1.7" fill="#fff"/><circle cx="1.8" cy="5.5" r="1.7" fill="#fff"/><circle cx="9" cy="9.2" r="1.7" fill="#fff"/><path d="M9 1.8 L1.8 5.5 L9 9.2" stroke="#fff" stroke-width="1" fill="none"/></svg>
<div class="t" style="left:728px;top:662.08px;font-size:9.1px;color:#f2f2f2;">Geteilte Dokumente ...</div>
<svg style="left:755px;top:600px;" width="9" height="14" viewBox="0 0 9 14"><path d="M0.5 0.5 L0.5 11 L3 8.5 L5 13 L6.8 12.2 L4.8 7.8 L8.2 7.8z" fill="#fff" stroke="#111" stroke-width="0.9"/></svg>
<div class="a" style="left:0px;top:793px;width:1395px;height:20px;background:#3b3b3b;"></div>
<div class="a" style="left:1175.5px;top:797.5px;width:11.5px;height:11.5px;border:1.3px solid #1f8f8f"></div>
<div class="t" style="left:1191px;top:797.5px;font-size:9.25px;color:#dcdcdc;">Ungelesene Dokumente markieren</div>
<svg style="left:1377px;top:796px;" width="14" height="14" viewBox="0 0 14 14"><circle cx="7" cy="7" r="7" fill="#e8962a"/><path d="M3 10 L7 8 L11 3" stroke="#fff" stroke-width="1.1" fill="none"/><rect x="2.5" y="2.5" width="4" height="3" fill="#f6e0c0"/></svg>
<div class="a" style="left:0px;top:813px;width:1393px;height:30px;background:#070c15;"></div>
<div class="a" style="left:1392px;top:813px;width:1px;height:30px;background:#1c2430;"></div>
<svg style="left:11px;top:822px;" width="13" height="12" viewBox="0 0 13 12"><path d="M0 1.6 L5.5 0.8 V5.5 H0z M6.5 0.7 L13 0 V5.5 H6.5z M0 6.5 H5.5 V11.2 L0 10.4z M6.5 6.5 H13 V12 L6.5 11.3z" fill="#e8e8e8"/></svg>
<div class="a" style="left:215px;top:813px;width:35px;height:30px;background:#252c36;"></div>
<div class="a" style="left:40px;top:841px;width:29px;height:2px;background:#5e8cb8;"></div>
<div class="a" style="left:75px;top:841px;width:30px;height:2px;background:#5e8cb8;"></div>
<div class="a" style="left:111px;top:841px;width:29px;height:2px;background:#5e8cb8;"></div>
<div class="a" style="left:146px;top:841px;width:30px;height:2px;background:#5e8cb8;"></div>
<div class="a" style="left:182px;top:841px;width:30px;height:2px;background:#5e8cb8;"></div>
<div class="a" style="left:215px;top:841px;width:35px;height:2px;background:#5e8cb8;"></div>
<svg style="left:45px;top:819px;" width="19" height="19" viewBox="0 0 19 19"><defs><linearGradient id="edg" x1="0" y1="0" x2="1" y2="1"><stop offset="0" stop-color="#46d36b"/><stop offset="0.5" stop-color="#1a9ee0"/><stop offset="1" stop-color="#1050b0"/></linearGradient></defs><circle cx="9.5" cy="9.5" r="9" fill="url(#edg)"/><path d="M5 11 C5 6 13 5 15 9 C13 8 9 8 9.5 11.5 C10 14 14 15 17 13 C15 18 5 18 5 11z" fill="#0c3c78"/></svg>
<svg style="left:82px;top:820px;" width="17" height="16" viewBox="0 0 17 16"><path d="M0 2 H6 L8 4 H17 V16 H0z" fill="#e8b830"/><rect x="0" y="6" width="17" height="10" fill="#f4cc48"/><rect x="4" y="10" width="9" height="3" fill="#2a80d0"/></svg>
<svg style="left:117px;top:820px;" width="17" height="16" viewBox="0 0 17 16"><path d="M8.5 0 L17 8 L8.5 16 L0 8z" fill="#3aa8a8"/><path d="M8.5 3 L13 8 L8.5 13 L4 8z" fill="#e0f4f0"/><circle cx="8.5" cy="8" r="2" fill="#2a6a7a"/></svg>
<svg style="left:153px;top:819px;" width="17" height="17" viewBox="0 0 17 17"><path d="M8.5 0 L17 8.5 L8.5 17 L0 8.5z" fill="#d84040"/><path d="M8.5 2 L15 8.5 L8.5 15z" fill="#50a840"/><path d="M2 8.5 L8.5 2 V8.5z" fill="#e8c030"/><circle cx="10" cy="10" r="3" fill="#3050b0"/></svg>
<svg style="left:188px;top:819px;" width="17" height="17" viewBox="0 0 17 17"><path d="M1 5 H7 L9 7 H16 V16 H1z" fill="#e89830"/><path d="M3 3 L10 1 L14 6 L6 9z" fill="#f0e0d0"/><path d="M9 2 L15 4" stroke="#d03030" stroke-width="1.5"/></svg>
<svg style="left:223px;top:819px;" width="18" height="18" viewBox="0 0 18 18"><circle cx="9" cy="9" r="9" fill="#1e8ae0"/><path d="M5 13 L9 10 L13 5" stroke="#fff" stroke-width="1.3" fill="none"/><rect x="3.5" y="3.5" width="5" height="4" rx="0.8" fill="#cfe6fa"/></svg>
<svg style="left:74px;top:832px;" width="14" height="11" viewBox="0 0 14 11"><rect x="0.7" y="0.7" width="12.6" height="9.6" rx="1.5" fill="none" stroke="#fff" stroke-width="1.3"/><path d="M7 8 V3 M4.5 5 L7 2.5 L9.5 5" stroke="#fff" stroke-width="1.3" fill="none"/></svg>
<svg style="left:301px;top:832px;" width="14" height="11" viewBox="0 0 14 11"><rect x="0.7" y="0.7" width="12.6" height="9.6" rx="1.5" fill="none" stroke="#fff" stroke-width="1.3"/><path d="M7 8 V3 M4.5 5 L7 2.5 L9.5 5" stroke="#fff" stroke-width="1.3" fill="none"/></svg>
<div class="t" style="left:139px;top:832.5px;font-size:14px;color:#fff;font-weight:bold;height:16px;line-height:16px;top:830px">@</div>
<svg style="left:1181px;top:821px;" width="13" height="13" viewBox="0 0 13 13"><rect x="0" y="4" width="8" height="8" fill="#c07070"/><rect x="4" y="0" width="9" height="9" fill="#9a9a9a"/><rect x="6" y="2" width="5" height="5" fill="#e0e0e0"/></svg>
<svg style="left:1198px;top:821px;" width="13" height="13" viewBox="0 0 13 13"><ellipse cx="3.5" cy="6" rx="3" ry="5" fill="#2c6cc0"/><ellipse cx="9.5" cy="6" rx="3" ry="5" fill="#4a9ae0"/><circle cx="9" cy="10.5" r="2.2" fill="#e02a2a"/></svg>
<svg style="left:1216px;top:821px;" width="13" height="13" viewBox="0 0 13 13"><circle cx="6.5" cy="6.5" r="6.2" fill="#2a5aa8"/><circle cx="6.5" cy="6.5" r="5" fill="#9ac040"/><path d="M4 6.5 L6 8.5 L9.5 4.5" stroke="#fff" stroke-width="1.1" fill="none"/></svg>
<svg style="left:1233px;top:821px;" width="13" height="13" viewBox="0 0 13 13"><path d="M6.5 0 L13 6.5 L6.5 13 L0 6.5z" fill="#30b0b8"/><circle cx="6.5" cy="6.5" r="1.8" fill="#083040"/></svg>
<svg style="left:1250px;top:821px;" width="13" height="13" viewBox="0 0 13 13"><rect x="2.5" y="1.5" width="10" height="7" fill="none" stroke="#ccc" stroke-width="1"/><path d="M7.5 9 V12 M5 12.5 H10 M0.5 3 H2 M0.5 5 H2" stroke="#ccc" stroke-width="1"/></svg>
<svg style="left:1267px;top:821px;" width="13" height="13" viewBox="0 0 13 13"><path d="M1 4.5 H3.5 L7 1.5 V11.5 L3.5 8.5 H1z" fill="none" stroke="#ccc" stroke-width="1"/><circle cx="10" cy="9.5" r="2.8" fill="#e02a2a"/><path d="M8.8 8.3 L11.2 10.7 M11.2 8.3 L8.8 10.7" stroke="#fff" stroke-width="0.8"/></svg>
<div class="t" style="left:1287px;top:821.5px;font-size:8.2px;color:#e4e4e4;">ENG</div>
<div class="t" style="left:1232.5px;top:815px;font-size:8.1px;color:#e4e4e4;width:200px;text-align:center;">10:16</div>
<div class="t" style="left:1232.5px;top:828px;font-size:7.9px;color:#e4e4e4;width:200px;text-align:center;">18.11.2025</div>
<svg style="left:1365px;top:821px;" width="13" height="13" viewBox="0 0 13 13"><path d="M0.6 0.6 H12.4 V9.4 H8 L6.5 11.5 L5 9.4 H0.6z" fill="none" stroke="#ddd" stroke-width="1.1"/></svg>
<div class="a" style="left:1402px;top:849px;width:186px;height:4px;background:#565656;"></div>
<div class="a" style="left:656px;top:855.5px;width:274px;height:3.5px;border-radius:2px;background:#8a8a8a"></div>
<div class="a" style="left:932px;top:855.5px;width:213px;height:3.5px;border-radius:2px;background:#8a8a8a"></div>
<div class="a" style="left:1147px;top:855.5px;width:441px;height:3.5px;border-radius:2px;background:#8a8a8a"></div>
<div class="a" style="left:11px;top:855.5px;width:6px;height:3.5px;border-radius:2px;background:#fff"></div>
<div class="a" style="left:20px;top:855.5px;width:62px;height:3.5px;border-radius:2px;background:#fff"></div>
<div class="a" style="left:85px;top:855.5px;width:78px;height:3.5px;border-radius:2px;background:#fff"></div>
<div class="a" style="left:165px;top:855.5px;width:263px;height:3.5px;border-radius:2px;background:#fff"></div>
<div class="a" style="left:431px;top:855.5px;width:119px;height:3.5px;border-radius:2px;background:#fff"></div>
<div class="a" style="left:553px;top:855.5px;width:103px;height:3.5px;border-radius:2px;background:#fff"></div>
<div class="a" style="left:650px;top:851px;width:12.5px;height:12.5px;border-radius:50%;background:#fff"></div>
<div class="a" style="left:6px;top:876px;width:362px;height:21px;border-radius:3px;background:rgba(58,60,106,.9)"></div>
<div class="t" style="left:11px;top:880px;font-size:13.5px;color:#7a7a84;height:18px;line-height:18px;top:877px;text-shadow:0.4px 0 0 #7a7a84">Benjamin Fehrenbach | Systemschub – powered by Klaes</div>
<svg style="left:15px;top:873px;" width="13" height="15" viewBox="0 0 13 15"><path d="M1 1 L12 7.5 L1 14z" fill="none" stroke="#fff" stroke-width="1.3"/></svg>
<svg style="left:40px;top:873px;" width="14" height="14" viewBox="0 0 14 14"><path d="M2 7 C3 2.5 11 2 12.5 6" fill="none" stroke="#eee" stroke-width="1.2"/><path d="M0.5 3.5 L2 7.5 L5.5 5.5" fill="none" stroke="#eee" stroke-width="1.2"/></svg>
<div class="t" style="left:41.5px;top:877px;font-size:7.5px;color:#eee;font-weight:bold;">10</div>
<svg style="left:67px;top:873px;" width="14" height="14" viewBox="0 0 14 14"><path d="M12 7 C11 2.5 3 2 1.5 6" fill="none" stroke="#eee" stroke-width="1.2"/><path d="M13.5 3.5 L12 7.5 L8.5 5.5" fill="none" stroke="#eee" stroke-width="1.2"/></svg>
<div class="t" style="left:68.5px;top:877px;font-size:7.5px;color:#eee;font-weight:bold;">10</div>
<svg style="left:93px;top:873px;" width="15" height="14" viewBox="0 0 15 14"><path d="M1 4.5 H4 L8 1 V13 L4 9.5 H1z" fill="none" stroke="#eee" stroke-width="1.2"/><path d="M10.5 4 C12 6 12 8 10.5 10 M12.5 2.5 C15 5.5 15 8.5 12.5 11.5" fill="none" stroke="#eee" stroke-width="1.1"/></svg>
<div class="t" style="left:123px;top:874px;font-size:11px;color:#fff;font-weight:bold;">13:04 / 31:58</div>
<svg style="left:1466px;top:872px;" width="16" height="16" viewBox="0 0 16 16"><circle cx="7" cy="5" r="3.2" fill="none" stroke="#eee" stroke-width="1.2"/><path d="M1 11 C1 9 13 9 13 11 C13 15 1 15 1 11z" fill="none" stroke="#eee" stroke-width="1.2"/><path d="M11.5 2.5 C12.5 4 12.5 6 11.5 7.5 M13.5 0.5 C15.5 3 15.5 7 13.5 9.5" fill="none" stroke="#eee" stroke-width="1.1"/></svg>
<svg style="left:1493px;top:874px;" width="14" height="12" viewBox="0 0 14 12"><rect x="0.6" y="0.6" width="12.8" height="10.8" rx="2" fill="none" stroke="#eee" stroke-width="1.2"/><path d="M6 4.5 C4.5 3.5 3 4.5 3 6 C3 7.5 4.5 8.5 6 7.5 M10.5 4.5 C9 3.5 7.5 4.5 7.5 6 C7.5 7.5 9 8.5 10.5 7.5" fill="none" stroke="#eee" stroke-width="1.2"/></svg>
<div class="t" style="left:1520px;top:874.5px;font-size:11px;color:#eee;font-weight:bold;">1x</div>
<svg style="left:1546px;top:873px;" width="15" height="15" viewBox="0 0 15 15"><path d="M7.5 0.8 L9.2 2.8 L11.8 2.2 L12.3 4.8 L14.5 6.3 L13.1 8.5 L13.8 11 L11.2 11.6 L9.8 14 L7.5 12.8 L5.2 14 L3.8 11.6 L1.2 11 L1.9 8.5 L0.5 6.3 L2.7 4.8 L3.2 2.2 L5.8 2.8z" fill="none" stroke="#eee" stroke-width="1.1"/><circle cx="7.5" cy="7.5" r="1.6" fill="none" stroke="#eee" stroke-width="1"/></svg>
<svg style="left:1574px;top:874px;" width="13" height="13" viewBox="0 0 13 13"><path d="M0.5 4 H4 V0.5 M9 0.5 V4 H12.5 M12.5 9 H9 V12.5 M4 12.5 V9 H0.5" fill="none" stroke="#eee" stroke-width="1.2"/></svg>
<svg style="left:1395px;top:78.5px;" width="204" height="115.5" viewBox="0 0 204 115.5">
<defs><linearGradient id="wall" x1="0" y1="0" x2="0" y2="1"><stop offset="0" stop-color="#ececee"/><stop offset="1" stop-color="#dcdcde"/></linearGradient></defs>
<rect width="204" height="115.5" fill="url(#wall)"/>
<rect x="0" y="92" width="204" height="24" fill="#d4d4d6"/>
<rect x="111" y="9.5" width="38" height="45" fill="#f4f4f4" stroke="#d0d0d0" stroke-width="0.8"/>
<path d="M118 26 H140 M124 30 H136" stroke="#5ab8c8" stroke-width="0.6"/>
<rect x="155.5" y="9.5" width="38" height="45" fill="#1c9fba" stroke="#d8d8d8" stroke-width="0.8"/>
<path d="M163 29 H186 M166 38 H183 M167 41 H182" stroke="#e8f8fa" stroke-width="0.7"/><rect x="167" y="31" width="15" height="4" fill="#e8f8fa" opacity="0.8"/>
<rect x="0" y="68" width="86" height="26" fill="#c8c8ca"/>
<rect x="2" y="60" width="29" height="18" rx="2" fill="#c6c6c8"/>
<rect x="33" y="64" width="30" height="14" rx="2" fill="#cdcdcf"/>
<rect x="64" y="59" width="24" height="19" rx="2" fill="#d4d4d6"/>
<rect x="0" y="73" width="88" height="19" fill="#d2d2d4"/>
<rect x="30" y="76" width="2" height="15" fill="#bdbdbf"/>
<ellipse cx="53" cy="82" rx="12" ry="2.5" fill="#f6f6f6"/>
<path d="M46 84 L44 100 M60 84 L62 100" stroke="#c8b090" stroke-width="1.2"/>
<rect x="51" y="75" width="6" height="6" fill="#eee"/><circle cx="54" cy="74" r="3" fill="#6a9a5a"/>
<rect x="178" y="78" width="20" height="18" fill="#ececec"/>
<path d="M188 80 C182 70 176 64 178 58 C184 64 186 70 188 78 C190 68 193 60 198 56 C198 66 193 72 188 80z" fill="#5a8a4a"/>
<path d="M53 115.5 L57 88 C60 74 70 68 88 65 L99 62 L121 62 L131 65 C148 69 154 76 157 88 L161 115.5z" fill="#0b0d12"/>
<path d="M99 62 L110 74 L121 62z" fill="#15171c"/>
<g transform="translate(0,3)">
<ellipse cx="109.5" cy="45.5" rx="13" ry="20" fill="#c49a88"/>
<path d="M96 40 C95 24 103 19 110 19 C118 19 124 24 123 40 C121 30 116 27 110 27 C103 27 98 30 96 40z" fill="#2a221e"/>
<path d="M96.5 48 C97 62 103 66 110 66 C117 66 122.5 62 123 48 C119 57 115 59 110 59 C105 59 100 57 96.5 48z" fill="#3a2a22"/>
<path d="M104 53 C107 51 113 51 116 53 C113 55 107 55 104 53z" fill="#4a3028"/>
<path d="M92 46 C89 22 100 15 110 15 C120 15 131 22 128 46" fill="none" stroke="#0e0e0e" stroke-width="3.2"/>
<rect x="88" y="39" width="8.5" height="13" rx="3.5" fill="#111"/><rect x="123.5" y="39" width="8.5" height="13" rx="3.5" fill="#111"/>
<path d="M99 40.5 h8 M112 40.5 h8 M107 40.5 h5" stroke="#6a5a54" stroke-width="0.9"/>
</g>
</svg>
<div class="a" style="left:1401.5px;top:246.5px;width:187px;height:22px;border-radius:3px;background:#6466b0"></div>
<div class="t" style="left:1406px;top:251.5px;font-size:13.2px;color:#f4f4fa;height:18px;line-height:18px;top:248.5px;text-shadow:0.4px 0 0 #f4f4fa">Benjamin Fehrenbach | Sys...</div>
<svg style="left:1415.5px;top:319px;filter:blur(0.5px)" width="70" height="80" viewBox="0 0 70 80"><rect x="20" y="0" width="10.5" height="10.5" fill="#5a4e4e"/><rect x="30" y="0" width="10.5" height="10.5" fill="#7a6a6a"/><rect x="40" y="0" width="10.5" height="10.5" fill="#111111"/><rect x="10" y="10" width="10.5" height="10.5" fill="#a89494"/><rect x="20" y="10" width="10.5" height="10.5" fill="#e8d0d2"/><rect x="30" y="10" width="10.5" height="10.5" fill="#e8d0d2"/><rect x="40" y="10" width="10.5" height="10.5" fill="#e8d4d4"/><rect x="50" y="10" width="10.5" height="10.5" fill="#b09a9a"/><rect x="0" y="20" width="10.5" height="10.5" fill="#4a3e40"/><rect x="10" y="20" width="10.5" height="10.5" fill="#ecd4d6"/><rect x="20" y="20" width="10.5" height="10.5" fill="#e0c4c8"/><rect x="30" y="20" width="10.5" height="10.5" fill="#d8bcc0"/><rect x="40" y="20" width="10.5" height="10.5" fill="#ecd4d6"/><rect x="50" y="20" width="10.5" height="10.5" fill="#ecd4d6"/><rect x="60" y="20" width="10.5" height="10.5" fill="#806e6e"/><rect x="0" y="30" width="10.5" height="10.5" fill="#9a8686"/><rect x="10" y="30" width="10.5" height="10.5" fill="#d8bcc0"/><rect x="20" y="30" width="10.5" height="10.5" fill="#d4b0b4"/><rect x="30" y="30" width="10.5" height="10.5" fill="#b09a9a"/><rect x="40" y="30" width="10.5" height="10.5" fill="#d8c0c0"/><rect x="50" y="30" width="10.5" height="10.5" fill="#ecd4d6"/><rect x="60" y="30" width="10.5" height="10.5" fill="#8a7676"/><rect x="0" y="40" width="10.5" height="10.5" fill="#7a6a6a"/><rect x="10" y="40" width="10.5" height="10.5" fill="#d8bcc0"/><rect x="20" y="40" width="10.5" height="10.5" fill="#d8c0c2"/><rect x="30" y="40" width="10.5" height="10.5" fill="#d8c0c2"/><rect x="40" y="40" width="10.5" height="10.5" fill="#c0a0a4"/><rect x="50" y="40" width="10.5" height="10.5" fill="#ecd4d6"/><rect x="60" y="40" width="10.5" height="10.5" fill="#7a6a6a"/><rect x="10" y="50" width="10.5" height="10.5" fill="#b89ea0"/><rect x="20" y="50" width="10.5" height="10.5" fill="#dcc4c6"/><rect x="30" y="50" width="10.5" height="10.5" fill="#dcc4c6"/><rect x="40" y="50" width="10.5" height="10.5" fill="#dcc4c6"/><rect x="50" y="50" width="10.5" height="10.5" fill="#b09a9a"/><rect x="0" y="60" width="10.5" height="10.5" fill="#5e5e5e"/><rect x="10" y="60" width="10.5" height="10.5" fill="#4a4a4a"/><rect x="20" y="60" width="10.5" height="10.5" fill="#a6a6a6"/><rect x="30" y="60" width="10.5" height="10.5" fill="#a6a6a6"/><rect x="40" y="60" width="10.5" height="10.5" fill="#8a8a8a"/><rect x="50" y="60" width="10.5" height="10.5" fill="#111111"/><rect x="10" y="70" width="10.5" height="10.5" fill="#6e6e6e"/><rect x="20" y="70" width="10.5" height="10.5" fill="#3a3a3a"/><rect x="40" y="70" width="10.5" height="10.5" fill="#505050"/></svg>
<svg style="left:1505.5px;top:319px;filter:blur(0.5px)" width="70" height="80" viewBox="0 0 70 80"><rect x="20" y="0" width="10.5" height="10.5" fill="#303030"/><rect x="30" y="0" width="10.5" height="10.5" fill="#7a8486"/><rect x="40" y="0" width="10.5" height="10.5" fill="#3e4646"/><rect x="10" y="10" width="10.5" height="10.5" fill="#8a9698"/><rect x="20" y="10" width="10.5" height="10.5" fill="#d8eef2"/><rect x="30" y="10" width="10.5" height="10.5" fill="#d8eef2"/><rect x="40" y="10" width="10.5" height="10.5" fill="#d8eef2"/><rect x="50" y="10" width="10.5" height="10.5" fill="#a8b4b8"/><rect x="10" y="20" width="10.5" height="10.5" fill="#d8eef2"/><rect x="20" y="20" width="10.5" height="10.5" fill="#d8eef2"/><rect x="30" y="20" width="10.5" height="10.5" fill="#d8eef2"/><rect x="40" y="20" width="10.5" height="10.5" fill="#c8dce2"/><rect x="50" y="20" width="10.5" height="10.5" fill="#c8dce2"/><rect x="60" y="20" width="10.5" height="10.5" fill="#6e7a7a"/><rect x="0" y="30" width="10.5" height="10.5" fill="#7a8486"/><rect x="10" y="30" width="10.5" height="10.5" fill="#c0d6dc"/><rect x="20" y="30" width="10.5" height="10.5" fill="#8aa4ac"/><rect x="30" y="30" width="10.5" height="10.5" fill="#a4bcc4"/><rect x="40" y="30" width="10.5" height="10.5" fill="#a4bcc4"/><rect x="50" y="30" width="10.5" height="10.5" fill="#80a0a4"/><rect x="60" y="30" width="10.5" height="10.5" fill="#a8b4b8"/><rect x="0" y="40" width="10.5" height="10.5" fill="#505a5e"/><rect x="10" y="40" width="10.5" height="10.5" fill="#c0d6dc"/><rect x="20" y="40" width="10.5" height="10.5" fill="#c0d6dc"/><rect x="30" y="40" width="10.5" height="10.5" fill="#a8c4cc"/><rect x="40" y="40" width="10.5" height="10.5" fill="#d0e4ea"/><rect x="50" y="40" width="10.5" height="10.5" fill="#c8dce2"/><rect x="60" y="40" width="10.5" height="10.5" fill="#a0aaae"/><rect x="10" y="50" width="10.5" height="10.5" fill="#a0aeb2"/><rect x="20" y="50" width="10.5" height="10.5" fill="#c8dce2"/><rect x="30" y="50" width="10.5" height="10.5" fill="#c8dce2"/><rect x="40" y="50" width="10.5" height="10.5" fill="#c8dce2"/><rect x="50" y="50" width="10.5" height="10.5" fill="#c8dce2"/><rect x="0" y="60" width="10.5" height="10.5" fill="#222222"/><rect x="10" y="60" width="10.5" height="10.5" fill="#707070"/><rect x="20" y="60" width="10.5" height="10.5" fill="#606464"/><rect x="30" y="60" width="10.5" height="10.5" fill="#7a8282"/><rect x="40" y="60" width="10.5" height="10.5" fill="#3a3e3e"/><rect x="50" y="60" width="10.5" height="10.5" fill="#aaaaaa"/><rect x="0" y="70" width="10.5" height="10.5" fill="#7a7a7a"/><rect x="20" y="70" width="10.5" height="10.5" fill="#404040"/><rect x="30" y="70" width="10.5" height="10.5" fill="#303030"/><rect x="40" y="70" width="10.5" height="10.5" fill="#444444"/><rect x="50" y="70" width="10.5" height="10.5" fill="#2a2a2a"/></svg>
<svg style="left:1415.5px;top:409px;filter:blur(0.5px)" width="70" height="80" viewBox="0 0 70 80"><rect x="20" y="0" width="10.5" height="10.5" fill="#5a5250"/><rect x="10" y="10" width="10.5" height="10.5" fill="#a89088"/><rect x="20" y="10" width="10.5" height="10.5" fill="#ecd8d0"/><rect x="30" y="10" width="10.5" height="10.5" fill="#fce0d8"/><rect x="40" y="10" width="10.5" height="10.5" fill="#f4dcd4"/><rect x="50" y="10" width="10.5" height="10.5" fill="#b0a098"/><rect x="10" y="20" width="10.5" height="10.5" fill="#fde0d8"/><rect x="20" y="20" width="10.5" height="10.5" fill="#fde0d8"/><rect x="30" y="20" width="10.5" height="10.5" fill="#fde0d8"/><rect x="40" y="20" width="10.5" height="10.5" fill="#fde0d8"/><rect x="50" y="20" width="10.5" height="10.5" fill="#fde0d8"/><rect x="60" y="20" width="10.5" height="10.5" fill="#7a7068"/><rect x="0" y="30" width="10.5" height="10.5" fill="#b0a098"/><rect x="10" y="30" width="10.5" height="10.5" fill="#fde0d8"/><rect x="20" y="30" width="10.5" height="10.5" fill="#dcbab0"/><rect x="30" y="30" width="10.5" height="10.5" fill="#d4aca4"/><rect x="40" y="30" width="10.5" height="10.5" fill="#d4aca4"/><rect x="50" y="30" width="10.5" height="10.5" fill="#fde0d8"/><rect x="60" y="30" width="10.5" height="10.5" fill="#8a7a74"/><rect x="0" y="40" width="10.5" height="10.5" fill="#8a7a74"/><rect x="10" y="40" width="10.5" height="10.5" fill="#fde0d8"/><rect x="20" y="40" width="10.5" height="10.5" fill="#e0c0b4"/><rect x="30" y="40" width="10.5" height="10.5" fill="#d8bcb0"/><rect x="40" y="40" width="10.5" height="10.5" fill="#f0d0c4"/><rect x="50" y="40" width="10.5" height="10.5" fill="#fde0d8"/><rect x="60" y="40" width="10.5" height="10.5" fill="#9a8884"/><rect x="0" y="50" width="10.5" height="10.5" fill="#111111"/><rect x="10" y="50" width="10.5" height="10.5" fill="#dcbcb4"/><rect x="20" y="50" width="10.5" height="10.5" fill="#f0d4cc"/><rect x="30" y="50" width="10.5" height="10.5" fill="#f0d4cc"/><rect x="40" y="50" width="10.5" height="10.5" fill="#f0d4cc"/><rect x="50" y="50" width="10.5" height="10.5" fill="#e0c8c0"/><rect x="0" y="60" width="10.5" height="10.5" fill="#333333"/><rect x="10" y="60" width="10.5" height="10.5" fill="#222222"/><rect x="20" y="60" width="10.5" height="10.5" fill="#a0a0a0"/><rect x="30" y="60" width="10.5" height="10.5" fill="#706a66"/><rect x="40" y="60" width="10.5" height="10.5" fill="#4a4444"/><rect x="50" y="60" width="10.5" height="10.5" fill="#111111"/><rect x="10" y="70" width="10.5" height="10.5" fill="#3a3a3a"/><rect x="20" y="70" width="10.5" height="10.5" fill="#6a6a6a"/><rect x="30" y="70" width="10.5" height="10.5" fill="#6a6a6a"/><rect x="40" y="70" width="10.5" height="10.5" fill="#4a4a4a"/><rect x="50" y="70" width="10.5" height="10.5" fill="#1a1a1a"/><rect x="60" y="70" width="10.5" height="10.5" fill="#111111"/></svg>
<svg style="left:1505.5px;top:409px;filter:blur(0.5px)" width="70" height="80" viewBox="0 0 70 80"><rect x="30" y="0" width="10.5" height="10.5" fill="#555555"/><rect x="10" y="10" width="10.5" height="10.5" fill="#8a8a8a"/><rect x="20" y="10" width="10.5" height="10.5" fill="#c8c4c0"/><rect x="30" y="10" width="10.5" height="10.5" fill="#b8a098"/><rect x="40" y="10" width="10.5" height="10.5" fill="#b0aaa8"/><rect x="50" y="10" width="10.5" height="10.5" fill="#b0b0b0"/><rect x="10" y="20" width="10.5" height="10.5" fill="#e8e8e8"/><rect x="20" y="20" width="10.5" height="10.5" fill="#dcccc4"/><rect x="30" y="20" width="10.5" height="10.5" fill="#e0a080"/><rect x="40" y="20" width="10.5" height="10.5" fill="#d4a890"/><rect x="50" y="20" width="10.5" height="10.5" fill="#e8e8e8"/><rect x="60" y="20" width="10.5" height="10.5" fill="#7a7a7a"/><rect x="0" y="30" width="10.5" height="10.5" fill="#888888"/><rect x="10" y="30" width="10.5" height="10.5" fill="#e8e8e8"/><rect x="20" y="30" width="10.5" height="10.5" fill="#ecdcd4"/><rect x="30" y="30" width="10.5" height="10.5" fill="#cc8870"/><rect x="40" y="30" width="10.5" height="10.5" fill="#e0a890"/><rect x="50" y="30" width="10.5" height="10.5" fill="#e8e8e8"/><rect x="60" y="30" width="10.5" height="10.5" fill="#aaaaaa"/><rect x="0" y="40" width="10.5" height="10.5" fill="#888888"/><rect x="10" y="40" width="10.5" height="10.5" fill="#e8e8e8"/><rect x="20" y="40" width="10.5" height="10.5" fill="#c8c8c8"/><rect x="30" y="40" width="10.5" height="10.5" fill="#e0a080"/><rect x="40" y="40" width="10.5" height="10.5" fill="#c8a090"/><rect x="50" y="40" width="10.5" height="10.5" fill="#e0e0e0"/><rect x="60" y="40" width="10.5" height="10.5" fill="#aaaaaa"/><rect x="10" y="50" width="10.5" height="10.5" fill="#909090"/><rect x="20" y="50" width="10.5" height="10.5" fill="#706a70"/><rect x="30" y="50" width="10.5" height="10.5" fill="#d4a090"/><rect x="40" y="50" width="10.5" height="10.5" fill="#a07a6a"/><rect x="50" y="50" width="10.5" height="10.5" fill="#b8b8b8"/><rect x="0" y="60" width="10.5" height="10.5" fill="#6a6a6a"/><rect x="10" y="60" width="10.5" height="10.5" fill="#0a0a0a"/><rect x="20" y="60" width="10.5" height="10.5" fill="#1a2030"/><rect x="30" y="60" width="10.5" height="10.5" fill="#808080"/><rect x="40" y="60" width="10.5" height="10.5" fill="#1e2024"/><rect x="50" y="60" width="10.5" height="10.5" fill="#909090"/><rect x="10" y="70" width="10.5" height="10.5" fill="#383838"/><rect x="20" y="70" width="10.5" height="10.5" fill="#6a6a6a"/><rect x="30" y="70" width="10.5" height="10.5" fill="#8a8a8a"/><rect x="50" y="70" width="10.5" height="10.5" fill="#111111"/><rect x="60" y="70" width="10.5" height="10.5" fill="#111111"/></svg>
<svg style="left:1415.5px;top:509px;filter:blur(0.5px)" width="70" height="70" viewBox="0 0 70 70"><rect x="10" y="0" width="10.5" height="10.5" fill="#808080"/><rect x="20" y="0" width="10.5" height="10.5" fill="#b0b0b0"/><rect x="30" y="0" width="10.5" height="10.5" fill="#b8b0a8"/><rect x="40" y="0" width="10.5" height="10.5" fill="#909090"/><rect x="50" y="0" width="10.5" height="10.5" fill="#707070"/><rect x="10" y="10" width="10.5" height="10.5" fill="#e4e4e0"/><rect x="20" y="10" width="10.5" height="10.5" fill="#c8b4a8"/><rect x="30" y="10" width="10.5" height="10.5" fill="#d8a088"/><rect x="40" y="10" width="10.5" height="10.5" fill="#e0b8a0"/><rect x="50" y="10" width="10.5" height="10.5" fill="#e8e8e8"/><rect x="60" y="10" width="10.5" height="10.5" fill="#111111"/><rect x="0" y="20" width="10.5" height="10.5" fill="#a0a0a0"/><rect x="10" y="20" width="10.5" height="10.5" fill="#e4e4e0"/><rect x="20" y="20" width="10.5" height="10.5" fill="#b89888"/><rect x="30" y="20" width="10.5" height="10.5" fill="#a87868"/><rect x="40" y="20" width="10.5" height="10.5" fill="#d89c84"/><rect x="50" y="20" width="10.5" height="10.5" fill="#e8e8e8"/><rect x="60" y="20" width="10.5" height="10.5" fill="#808080"/><rect x="0" y="30" width="10.5" height="10.5" fill="#808080"/><rect x="10" y="30" width="10.5" height="10.5" fill="#e4e4e0"/><rect x="20" y="30" width="10.5" height="10.5" fill="#a89088"/><rect x="30" y="30" width="10.5" height="10.5" fill="#b07868"/><rect x="40" y="30" width="10.5" height="10.5" fill="#d8c8c0"/><rect x="50" y="30" width="10.5" height="10.5" fill="#e8e8e8"/><rect x="60" y="30" width="10.5" height="10.5" fill="#a0a0a0"/><rect x="10" y="40" width="10.5" height="10.5" fill="#a0a0a0"/><rect x="20" y="40" width="10.5" height="10.5" fill="#a8a8a8"/><rect x="30" y="40" width="10.5" height="10.5" fill="#b09888"/><rect x="40" y="40" width="10.5" height="10.5" fill="#d8ccc0"/><rect x="50" y="40" width="10.5" height="10.5" fill="#d0d0d0"/><rect x="0" y="50" width="10.5" height="10.5" fill="#6a6a6a"/><rect x="10" y="50" width="10.5" height="10.5" fill="#000000"/><rect x="20" y="50" width="10.5" height="10.5" fill="#3a3a3a"/><rect x="30" y="50" width="10.5" height="10.5" fill="#585450"/><rect x="40" y="50" width="10.5" height="10.5" fill="#706a68"/><rect x="50" y="50" width="10.5" height="10.5" fill="#0a0a0a"/><rect x="10" y="60" width="10.5" height="10.5" fill="#5a5a5a"/><rect x="20" y="60" width="10.5" height="10.5" fill="#7a7a7a"/><rect x="30" y="60" width="10.5" height="10.5" fill="#8a8a8a"/><rect x="40" y="60" width="10.5" height="10.5" fill="#222222"/><rect x="50" y="60" width="10.5" height="10.5" fill="#606060"/></svg>
<svg style="left:1505.5px;top:509px;filter:blur(0.5px)" width="70" height="70" viewBox="0 0 70 70"><rect x="10" y="0" width="10.5" height="10.5" fill="#504c44"/><rect x="20" y="0" width="10.5" height="10.5" fill="#dccca8"/><rect x="30" y="0" width="10.5" height="10.5" fill="#ece0c0"/><rect x="40" y="0" width="10.5" height="10.5" fill="#d8ccb0"/><rect x="50" y="0" width="10.5" height="10.5" fill="#a8a08c"/><rect x="10" y="10" width="10.5" height="10.5" fill="#e0d0b0"/><rect x="20" y="10" width="10.5" height="10.5" fill="#f8e8c8"/><rect x="30" y="10" width="10.5" height="10.5" fill="#f8e8c8"/><rect x="40" y="10" width="10.5" height="10.5" fill="#f8e8c8"/><rect x="50" y="10" width="10.5" height="10.5" fill="#f8e8c8"/><rect x="60" y="10" width="10.5" height="10.5" fill="#8a8274"/><rect x="0" y="20" width="10.5" height="10.5" fill="#8a8474"/><rect x="10" y="20" width="10.5" height="10.5" fill="#f8e8c8"/><rect x="20" y="20" width="10.5" height="10.5" fill="#d8c4a0"/><rect x="30" y="20" width="10.5" height="10.5" fill="#f8e8c8"/><rect x="40" y="20" width="10.5" height="10.5" fill="#d8c8a0"/><rect x="50" y="20" width="10.5" height="10.5" fill="#f8e8c8"/><rect x="60" y="20" width="10.5" height="10.5" fill="#b0a890"/><rect x="0" y="30" width="10.5" height="10.5" fill="#8a8474"/><rect x="10" y="30" width="10.5" height="10.5" fill="#f8e8c8"/><rect x="20" y="30" width="10.5" height="10.5" fill="#f8e8c8"/><rect x="30" y="30" width="10.5" height="10.5" fill="#c8b898"/><rect x="40" y="30" width="10.5" height="10.5" fill="#b8a880"/><rect x="50" y="30" width="10.5" height="10.5" fill="#f8e8c8"/><rect x="60" y="30" width="10.5" height="10.5" fill="#b8ac98"/><rect x="10" y="40" width="10.5" height="10.5" fill="#e0d0b0"/><rect x="20" y="40" width="10.5" height="10.5" fill="#f8e8c8"/><rect x="30" y="40" width="10.5" height="10.5" fill="#f8e8c8"/><rect x="40" y="40" width="10.5" height="10.5" fill="#f8e8c8"/><rect x="50" y="40" width="10.5" height="10.5" fill="#f8e8c8"/><rect x="60" y="40" width="10.5" height="10.5" fill="#201c14"/><rect x="0" y="50" width="10.5" height="10.5" fill="#0a0a0a"/><rect x="20" y="50" width="10.5" height="10.5" fill="#6a6460"/><rect x="30" y="50" width="10.5" height="10.5" fill="#aaa4a0"/><rect x="40" y="50" width="10.5" height="10.5" fill="#747068"/><rect x="50" y="50" width="10.5" height="10.5" fill="#4a443a"/><rect x="0" y="60" width="10.5" height="10.5" fill="#909090"/><rect x="10" y="60" width="10.5" height="10.5" fill="#9a9a9a"/><rect x="20" y="60" width="10.5" height="10.5" fill="#a0a0a0"/><rect x="30" y="60" width="10.5" height="10.5" fill="#222222"/><rect x="40" y="60" width="10.5" height="10.5" fill="#909090"/><rect x="50" y="60" width="10.5" height="10.5" fill="#6a6a6a"/></svg>
<svg style="left:1415.5px;top:599px;filter:blur(0.5px)" width="70" height="70" viewBox="0 0 70 70"><rect x="10" y="0" width="10.5" height="10.5" fill="#383c3a"/><rect x="20" y="0" width="10.5" height="10.5" fill="#b8bcbe"/><rect x="30" y="0" width="10.5" height="10.5" fill="#b8bec4"/><rect x="40" y="0" width="10.5" height="10.5" fill="#a0a8ac"/><rect x="10" y="10" width="10.5" height="10.5" fill="#c8d0d4"/><rect x="20" y="10" width="10.5" height="10.5" fill="#d4dde2"/><rect x="30" y="10" width="10.5" height="10.5" fill="#d4dde2"/><rect x="40" y="10" width="10.5" height="10.5" fill="#d4dde2"/><rect x="50" y="10" width="10.5" height="10.5" fill="#c0c8cc"/><rect x="0" y="20" width="10.5" height="10.5" fill="#8a9090"/><rect x="10" y="20" width="10.5" height="10.5" fill="#d4dde2"/><rect x="20" y="20" width="10.5" height="10.5" fill="#8a9a9e"/><rect x="30" y="20" width="10.5" height="10.5" fill="#b0c0c4"/><rect x="40" y="20" width="10.5" height="10.5" fill="#a8b0b4"/><rect x="50" y="20" width="10.5" height="10.5" fill="#d4dde2"/><rect x="60" y="20" width="10.5" height="10.5" fill="#6a7070"/><rect x="0" y="30" width="10.5" height="10.5" fill="#707878"/><rect x="10" y="30" width="10.5" height="10.5" fill="#d4dde2"/><rect x="20" y="30" width="10.5" height="10.5" fill="#98a8ac"/><rect x="30" y="30" width="10.5" height="10.5" fill="#b0c4c8"/><rect x="40" y="30" width="10.5" height="10.5" fill="#8a9898"/><rect x="50" y="30" width="10.5" height="10.5" fill="#d4dde2"/><rect x="60" y="30" width="10.5" height="10.5" fill="#a0a8aa"/><rect x="0" y="40" width="10.5" height="10.5" fill="#505050"/><rect x="10" y="40" width="10.5" height="10.5" fill="#d4dde2"/><rect x="20" y="40" width="10.5" height="10.5" fill="#d4dde2"/><rect x="30" y="40" width="10.5" height="10.5" fill="#d4dde2"/><rect x="40" y="40" width="10.5" height="10.5" fill="#d4dde2"/><rect x="50" y="40" width="10.5" height="10.5" fill="#d4dde2"/><rect x="0" y="50" width="10.5" height="10.5" fill="#888888"/><rect x="10" y="50" width="10.5" height="10.5" fill="#5a6060"/><rect x="20" y="50" width="10.5" height="10.5" fill="#8a9090"/><rect x="30" y="50" width="10.5" height="10.5" fill="#a0a8a8"/><rect x="40" y="50" width="10.5" height="10.5" fill="#889090"/><rect x="50" y="50" width="10.5" height="10.5" fill="#707878"/><rect x="0" y="60" width="10.5" height="10.5" fill="#b0b0b0"/><rect x="10" y="60" width="10.5" height="10.5" fill="#8a8a8a"/><rect x="20" y="60" width="10.5" height="10.5" fill="#3a3a3a"/><rect x="30" y="60" width="10.5" height="10.5" fill="#606060"/><rect x="40" y="60" width="10.5" height="10.5" fill="#8a8a8a"/><rect x="50" y="60" width="10.5" height="10.5" fill="#808080"/><rect x="60" y="60" width="10.5" height="10.5" fill="#2a2a2a"/></svg>
<svg style="left:1505.5px;top:599px;filter:blur(0.5px)" width="70" height="70" viewBox="0 0 70 70"><rect x="20" y="0" width="10.5" height="10.5" fill="#9a9aa8"/><rect x="30" y="0" width="10.5" height="10.5" fill="#c4c0d4"/><rect x="40" y="0" width="10.5" height="10.5" fill="#a8a4b8"/><rect x="50" y="0" width="10.5" height="10.5" fill="#505058"/><rect x="10" y="10" width="10.5" height="10.5" fill="#a8a4b8"/><rect x="20" y="10" width="10.5" height="10.5" fill="#dcdaf0"/><rect x="30" y="10" width="10.5" height="10.5" fill="#dcdaf0"/><rect x="40" y="10" width="10.5" height="10.5" fill="#dcdaf0"/><rect x="50" y="10" width="10.5" height="10.5" fill="#dcdaf0"/><rect x="60" y="10" width="10.5" height="10.5" fill="#6a6a74"/><rect x="0" y="20" width="10.5" height="10.5" fill="#5a5860"/><rect x="10" y="20" width="10.5" height="10.5" fill="#dcdaf0"/><rect x="20" y="20" width="10.5" height="10.5" fill="#b8b4d0"/><rect x="30" y="20" width="10.5" height="10.5" fill="#a8a4c4"/><rect x="40" y="20" width="10.5" height="10.5" fill="#c0bcd8"/><rect x="50" y="20" width="10.5" height="10.5" fill="#ccc8e0"/><rect x="60" y="20" width="10.5" height="10.5" fill="#9894a8"/><rect x="0" y="30" width="10.5" height="10.5" fill="#7a7884"/><rect x="10" y="30" width="10.5" height="10.5" fill="#dcdaf0"/><rect x="20" y="30" width="10.5" height="10.5" fill="#2a2c60"/><rect x="30" y="30" width="10.5" height="10.5" fill="#c0bcd8"/><rect x="40" y="30" width="10.5" height="10.5" fill="#d4d0e8"/><rect x="50" y="30" width="10.5" height="10.5" fill="#ccc8e0"/><rect x="60" y="30" width="10.5" height="10.5" fill="#a8a4b8"/><rect x="10" y="40" width="10.5" height="10.5" fill="#c8c4dc"/><rect x="20" y="40" width="10.5" height="10.5" fill="#dcdaf0"/><rect x="30" y="40" width="10.5" height="10.5" fill="#dcdaf0"/><rect x="40" y="40" width="10.5" height="10.5" fill="#dcdaf0"/><rect x="50" y="40" width="10.5" height="10.5" fill="#dcdaf0"/><rect x="60" y="40" width="10.5" height="10.5" fill="#8a8894"/><rect x="0" y="50" width="10.5" height="10.5" fill="#505050"/><rect x="10" y="50" width="10.5" height="10.5" fill="#303038"/><rect x="20" y="50" width="10.5" height="10.5" fill="#8a8a98"/><rect x="30" y="50" width="10.5" height="10.5" fill="#9898a4"/><rect x="40" y="50" width="10.5" height="10.5" fill="#8a8a98"/><rect x="50" y="50" width="10.5" height="10.5" fill="#74747e"/><rect x="0" y="60" width="10.5" height="10.5" fill="#c0c0c0"/><rect x="10" y="60" width="10.5" height="10.5" fill="#6a6a6a"/><rect x="20" y="60" width="10.5" height="10.5" fill="#a0a0a0"/><rect x="30" y="60" width="10.5" height="10.5" fill="#222222"/><rect x="40" y="60" width="10.5" height="10.5" fill="#909090"/><rect x="50" y="60" width="10.5" height="10.5" fill="#505050"/></svg>
<svg style="left:1415.5px;top:689px;filter:blur(0.5px)" width="70" height="70" viewBox="0 0 70 70"><rect x="20" y="0" width="10.5" height="10.5" fill="#7a7e7a"/><rect x="30" y="0" width="10.5" height="10.5" fill="#a8acaa"/><rect x="40" y="0" width="10.5" height="10.5" fill="#a4a8a6"/><rect x="10" y="10" width="10.5" height="10.5" fill="#b8bcb8"/><rect x="20" y="10" width="10.5" height="10.5" fill="#dce0dc"/><rect x="30" y="10" width="10.5" height="10.5" fill="#dce0dc"/><rect x="40" y="10" width="10.5" height="10.5" fill="#dce0dc"/><rect x="50" y="10" width="10.5" height="10.5" fill="#c0c4c0"/><rect x="0" y="20" width="10.5" height="10.5" fill="#8a8e8a"/><rect x="10" y="20" width="10.5" height="10.5" fill="#dce0dc"/><rect x="20" y="20" width="10.5" height="10.5" fill="#dce0dc"/><rect x="30" y="20" width="10.5" height="10.5" fill="#c4c8c0"/><rect x="40" y="20" width="10.5" height="10.5" fill="#c8ccc4"/><rect x="50" y="20" width="10.5" height="10.5" fill="#dce0dc"/><rect x="60" y="20" width="10.5" height="10.5" fill="#808480"/><rect x="0" y="30" width="10.5" height="10.5" fill="#7a7e7a"/><rect x="10" y="30" width="10.5" height="10.5" fill="#dce0dc"/><rect x="20" y="30" width="10.5" height="10.5" fill="#c0c4b8"/><rect x="30" y="30" width="10.5" height="10.5" fill="#c8ccbc"/><rect x="40" y="30" width="10.5" height="10.5" fill="#dce0dc"/><rect x="50" y="30" width="10.5" height="10.5" fill="#dce0dc"/><rect x="60" y="30" width="10.5" height="10.5" fill="#909490"/><rect x="0" y="40" width="10.5" height="10.5" fill="#6a6e6a"/><rect x="10" y="40" width="10.5" height="10.5" fill="#dce0dc"/><rect x="20" y="40" width="10.5" height="10.5" fill="#dce0dc"/><rect x="30" y="40" width="10.5" height="10.5" fill="#dce0dc"/><rect x="40" y="40" width="10.5" height="10.5" fill="#dce0dc"/><rect x="50" y="40" width="10.5" height="10.5" fill="#dce0dc"/><rect x="60" y="40" width="10.5" height="10.5" fill="#151515"/><rect x="10" y="50" width="10.5" height="10.5" fill="#a0a4a0"/><rect x="20" y="50" width="10.5" height="10.5" fill="#b8bcb8"/><rect x="30" y="50" width="10.5" height="10.5" fill="#b8bcb8"/><rect x="40" y="50" width="10.5" height="10.5" fill="#b8bcb8"/><rect x="50" y="50" width="10.5" height="10.5" fill="#888c88"/><rect x="0" y="60" width="10.5" height="10.5" fill="#5a5a5a"/><rect x="10" y="60" width="10.5" height="10.5" fill="#a0a0a0"/><rect x="20" y="60" width="10.5" height="10.5" fill="#6a6a6a"/><rect x="30" y="60" width="10.5" height="10.5" fill="#4a4a4a"/><rect x="40" y="60" width="10.5" height="10.5" fill="#0a0a0a"/><rect x="60" y="60" width="10.5" height="10.5" fill="#1a1a1a"/></svg>
<svg style="left:1505.5px;top:689px;filter:blur(0.5px)" width="70" height="70" viewBox="0 0 70 70"><rect x="20" y="0" width="10.5" height="10.5" fill="#8a8070"/><rect x="30" y="0" width="10.5" height="10.5" fill="#c8bca0"/><rect x="40" y="0" width="10.5" height="10.5" fill="#c4b89c"/><rect x="10" y="10" width="10.5" height="10.5" fill="#b8ac90"/><rect x="20" y="10" width="10.5" height="10.5" fill="#f8e8cc"/><rect x="30" y="10" width="10.5" height="10.5" fill="#f8e8cc"/><rect x="40" y="10" width="10.5" height="10.5" fill="#f8e8cc"/><rect x="50" y="10" width="10.5" height="10.5" fill="#e8dcc4"/><rect x="60" y="10" width="10.5" height="10.5" fill="#0a0a0a"/><rect x="0" y="20" width="10.5" height="10.5" fill="#1a1814"/><rect x="10" y="20" width="10.5" height="10.5" fill="#f8e8cc"/><rect x="20" y="20" width="10.5" height="10.5" fill="#e0d0b0"/><rect x="30" y="20" width="10.5" height="10.5" fill="#e0d0b0"/><rect x="40" y="20" width="10.5" height="10.5" fill="#f8e8cc"/><rect x="50" y="20" width="10.5" height="10.5" fill="#ecdcbc"/><rect x="60" y="20" width="10.5" height="10.5" fill="#8a8474"/><rect x="0" y="30" width="10.5" height="10.5" fill="#8a8474"/><rect x="10" y="30" width="10.5" height="10.5" fill="#f8e8cc"/><rect x="20" y="30" width="10.5" height="10.5" fill="#d8c8a8"/><rect x="30" y="30" width="10.5" height="10.5" fill="#c0a480"/><rect x="40" y="30" width="10.5" height="10.5" fill="#d4bc9c"/><rect x="50" y="30" width="10.5" height="10.5" fill="#ecdcbc"/><rect x="60" y="30" width="10.5" height="10.5" fill="#b8ac98"/><rect x="10" y="40" width="10.5" height="10.5" fill="#f4e4c4"/><rect x="20" y="40" width="10.5" height="10.5" fill="#f4e4c4"/><rect x="30" y="40" width="10.5" height="10.5" fill="#f4e4c4"/><rect x="40" y="40" width="10.5" height="10.5" fill="#ecdcbc"/><rect x="50" y="40" width="10.5" height="10.5" fill="#ecdcbc"/><rect x="60" y="40" width="10.5" height="10.5" fill="#b8ac98"/><rect x="10" y="50" width="10.5" height="10.5" fill="#7a7264"/><rect x="20" y="50" width="10.5" height="10.5" fill="#c4b89c"/><rect x="30" y="50" width="10.5" height="10.5" fill="#c4b89c"/><rect x="40" y="50" width="10.5" height="10.5" fill="#c4b89c"/><rect x="50" y="50" width="10.5" height="10.5" fill="#9a8e7c"/><rect x="0" y="60" width="10.5" height="10.5" fill="#9a9a9a"/><rect x="10" y="60" width="10.5" height="10.5" fill="#8a8a8a"/><rect x="20" y="60" width="10.5" height="10.5" fill="#8a8a8a"/><rect x="30" y="60" width="10.5" height="10.5" fill="#3a3a34"/><rect x="40" y="60" width="10.5" height="10.5" fill="#9a9a9a"/><rect x="50" y="60" width="10.5" height="10.5" fill="#8a8a8a"/><rect x="60" y="60" width="10.5" height="10.5" fill="#111111"/></svg>
<svg style="left:1415.5px;top:779px;filter:blur(0.5px)" width="70" height="70" viewBox="0 0 70 70"><rect x="20" y="0" width="10.5" height="10.5" fill="#6a5a5e"/><rect x="30" y="0" width="10.5" height="10.5" fill="#8a7a7e"/><rect x="40" y="0" width="10.5" height="10.5" fill="#7e6e72"/><rect x="10" y="10" width="10.5" height="10.5" fill="#9a8488"/><rect x="20" y="10" width="10.5" height="10.5" fill="#d4b4bc"/><rect x="30" y="10" width="10.5" height="10.5" fill="#d4b4bc"/><rect x="40" y="10" width="10.5" height="10.5" fill="#d4b4bc"/><rect x="50" y="10" width="10.5" height="10.5" fill="#9a8488"/><rect x="0" y="20" width="10.5" height="10.5" fill="#6a5a5e"/><rect x="10" y="20" width="10.5" height="10.5" fill="#c8a8b0"/><rect x="20" y="20" width="10.5" height="10.5" fill="#c8a8b0"/><rect x="30" y="20" width="10.5" height="10.5" fill="#b8949c"/><rect x="40" y="20" width="10.5" height="10.5" fill="#c8a8b0"/><rect x="50" y="20" width="10.5" height="10.5" fill="#c8a8b0"/><rect x="60" y="20" width="10.5" height="10.5" fill="#6a5a5e"/><rect x="0" y="30" width="10.5" height="10.5" fill="#6a5a5e"/><rect x="10" y="30" width="10.5" height="10.5" fill="#c8a8b0"/><rect x="20" y="30" width="10.5" height="10.5" fill="#a88890"/><rect x="30" y="30" width="10.5" height="10.5" fill="#a88890"/><rect x="40" y="30" width="10.5" height="10.5" fill="#b8949c"/><rect x="50" y="30" width="10.5" height="10.5" fill="#c0a0a8"/><rect x="60" y="30" width="10.5" height="10.5" fill="#6a5a5e"/><rect x="0" y="40" width="10.5" height="10.5" fill="#5a4a4e"/><rect x="10" y="40" width="10.5" height="10.5" fill="#b8949c"/><rect x="20" y="40" width="10.5" height="10.5" fill="#a88890"/><rect x="30" y="40" width="10.5" height="10.5" fill="#b8949c"/><rect x="40" y="40" width="10.5" height="10.5" fill="#a88890"/><rect x="50" y="40" width="10.5" height="10.5" fill="#c0a0a8"/><rect x="60" y="40" width="10.5" height="10.5" fill="#4a3e42"/><rect x="10" y="50" width="10.5" height="10.5" fill="#8a7478"/><rect x="20" y="50" width="10.5" height="10.5" fill="#9a8488"/><rect x="30" y="50" width="10.5" height="10.5" fill="#9a8488"/><rect x="40" y="50" width="10.5" height="10.5" fill="#9a8488"/><rect x="50" y="50" width="10.5" height="10.5" fill="#6a5a5e"/><rect x="0" y="60" width="10.5" height="10.5" fill="#5a5a5a"/><rect x="10" y="60" width="10.5" height="10.5" fill="#3a3a3a"/><rect x="20" y="60" width="10.5" height="10.5" fill="#3a3a3a"/><rect x="30" y="60" width="10.5" height="10.5" fill="#5a5a5a"/><rect x="40" y="60" width="10.5" height="10.5" fill="#4a4a4a"/><rect x="50" y="60" width="10.5" height="10.5" fill="#3a3a3a"/></svg>
<svg style="left:1505.5px;top:779px;filter:blur(0.5px)" width="70" height="70" viewBox="0 0 70 70"><rect x="20" y="0" width="10.5" height="10.5" fill="#20203a"/><rect x="30" y="0" width="10.5" height="10.5" fill="#262848"/><rect x="40" y="0" width="10.5" height="10.5" fill="#262848"/><rect x="10" y="10" width="10.5" height="10.5" fill="#2e3058"/><rect x="20" y="10" width="10.5" height="10.5" fill="#3a3e6a"/><rect x="30" y="10" width="10.5" height="10.5" fill="#3a3e6a"/><rect x="40" y="10" width="10.5" height="10.5" fill="#3a3e6a"/><rect x="50" y="10" width="10.5" height="10.5" fill="#2e3058"/><rect x="10" y="20" width="10.5" height="10.5" fill="#343860"/><rect x="20" y="20" width="10.5" height="10.5" fill="#343860"/><rect x="30" y="20" width="10.5" height="10.5" fill="#343860"/><rect x="40" y="20" width="10.5" height="10.5" fill="#343860"/><rect x="50" y="20" width="10.5" height="10.5" fill="#343860"/><rect x="60" y="20" width="10.5" height="10.5" fill="#1e2038"/><rect x="0" y="30" width="10.5" height="10.5" fill="#1e2038"/><rect x="10" y="30" width="10.5" height="10.5" fill="#343860"/><rect x="20" y="30" width="10.5" height="10.5" fill="#343860"/><rect x="30" y="30" width="10.5" height="10.5" fill="#9a9aa8"/><rect x="40" y="30" width="10.5" height="10.5" fill="#8a8a98"/><rect x="50" y="30" width="10.5" height="10.5" fill="#2e3058"/><rect x="60" y="30" width="10.5" height="10.5" fill="#262848"/><rect x="10" y="40" width="10.5" height="10.5" fill="#343860"/><rect x="20" y="40" width="10.5" height="10.5" fill="#343860"/><rect x="30" y="40" width="10.5" height="10.5" fill="#343860"/><rect x="40" y="40" width="10.5" height="10.5" fill="#343860"/><rect x="50" y="40" width="10.5" height="10.5" fill="#343860"/><rect x="60" y="40" width="10.5" height="10.5" fill="#262848"/><rect x="10" y="50" width="10.5" height="10.5" fill="#20203a"/><rect x="20" y="50" width="10.5" height="10.5" fill="#2e3058"/><rect x="30" y="50" width="10.5" height="10.5" fill="#2e3058"/><rect x="40" y="50" width="10.5" height="10.5" fill="#2e3058"/><rect x="50" y="50" width="10.5" height="10.5" fill="#1e2038"/><rect x="10" y="60" width="10.5" height="10.5" fill="#0a0a14"/><rect x="20" y="60" width="10.5" height="10.5" fill="#1a1a30"/><rect x="30" y="60" width="10.5" height="10.5" fill="#1a1a30"/></svg>
</body></html>
